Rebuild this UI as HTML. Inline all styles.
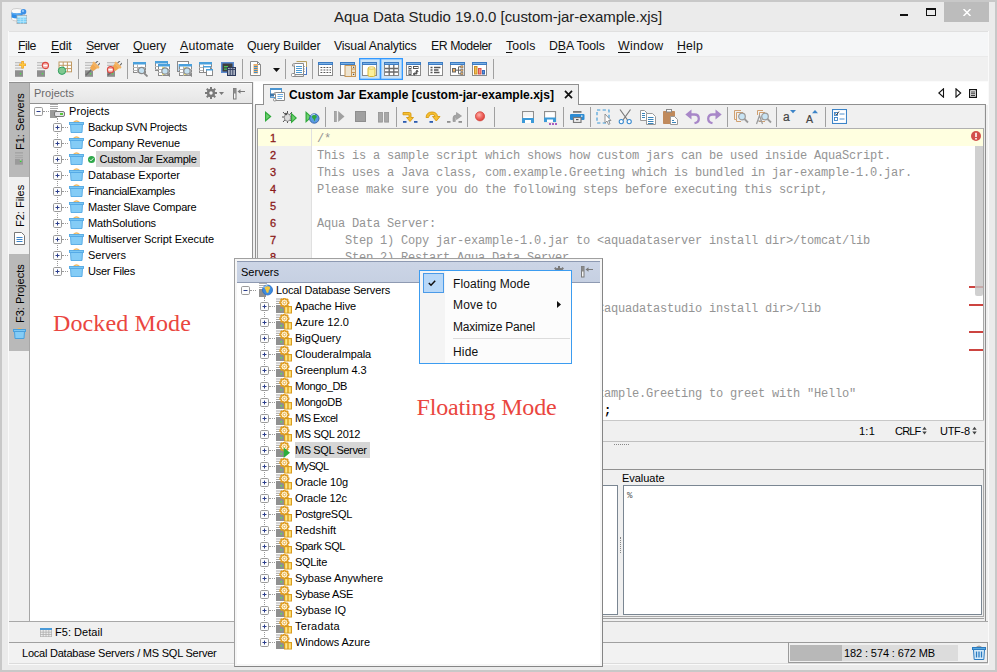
<!DOCTYPE html>
<html><head><meta charset="utf-8"><title>Aqua Data Studio 19.0.0 [custom-jar-example.xjs]</title>
<style>
*{box-sizing:border-box}
html,body{margin:0;padding:0}
body{width:997px;height:672px;overflow:hidden;background:#ebebeb;font-family:"Liberation Sans",sans-serif;font-size:11px;color:#000;position:relative}
.ab{position:absolute}
.t{position:absolute;white-space:nowrap;line-height:16px;height:16px;font-size:11px;letter-spacing:-0.2px}
.m{position:absolute;top:38px;white-space:nowrap;font-size:12.300px;line-height:16px;color:#111}
.m u{text-decoration:underline;text-underline-offset:2px}
.sep{position:absolute;width:1px;background:#a0a0a0}
.code{position:absolute;left:317px;white-space:pre;font-family:"Liberation Mono",monospace;font-size:12px;letter-spacing:-0.200px;line-height:17px;height:17px;color:#949494}
.ln{position:absolute;left:270px;white-space:pre;font-size:11px;line-height:17px;height:17px;color:#8b1a1a;-webkit-text-stroke:.3px #8b1a1a}
.vt{position:absolute;white-space:nowrap;font-size:11px;transform-origin:0 0;transform:rotate(-90deg);line-height:14px;height:14px}
.sel{background:#d6d6d6}
.dots{position:absolute;border-left:1px dotted #9a9a9a;width:0}
.hd{position:absolute;border-top:1px dotted #9a9a9a;height:0}
.cm{position:absolute;white-space:nowrap;font-size:12px;line-height:16px;color:#111}
</style></head><body>

<div class="ab" style="left:0;top:0;width:997px;height:672px;background:#ebebeb;border:2px solid #c8c8c8"></div>
<div class="ab" style="left:8px;top:31px;width:981px;height:634px;background:#fafafa"></div>
<div class="ab" style="left:334px;top:7px;font-size:15px;letter-spacing:-0.045px;line-height:20px;color:#222;white-space:nowrap">Aqua Data Studio 19.0.0 [custom-jar-example.xjs]</div>
<svg class="ab" style="left:11px;top:8px" width="16" height="16" viewBox="0 0 16 16"><path d="M.5 2.500Q.5 .5 6 .5Q11.500 .5 11.500 2.500V11Q11.500 13 6 13Q.5 13 .5 11Z" fill="#fafafa" stroke="#c4c4c4" stroke-width=".8"/><path d="M.6 4.500Q6 6.500 11.400 4.500V9.500Q6 11.500 .6 9.500Z" fill="#2e8ee8"/><path d="M.6 4.500Q6 6.500 11.400 4.500V6Q6 8 .6 6Z" fill="#58a8f0"/><circle cx="12.500" cy="3.800" r="2.800" fill="#3a8ee6"/><circle cx="12" cy="3" r="1.200" fill="#8cc4f8"/><rect x="6" y="7.500" width="9.800" height="8.200" fill="#7ad0f8" stroke="#a8a8a8" stroke-width=".8"/><rect x="6.400" y="7.900" width="9" height="1.800" fill="#c8ecfc"/><path d="M6 11.300H15.800M6 13.500H15.800M9.300 9.700V15.700M12.600 9.700V15.700" stroke="#b8e6fc" stroke-width=".7"/></svg>
<div class="ab" style="left:900px;top:14px;width:8px;height:2px;background:#111"></div>
<div class="ab" style="left:926px;top:8px;width:10px;height:8px;border:1px solid #111;border-top-width:2px"></div>
<div class="ab" style="left:944px;top:2px;width:45px;height:20px;background:#bcbcbc"></div>
<svg class="ab" style="left:963px;top:9px" width="8" height="7" viewBox="0 0 8 7"><path d="M.5 0L7.500 7M7.500 0L.5 7" stroke="#fff" stroke-width="1.500"/></svg>
<div class="ab" style="left:9px;top:31px;width:979px;height:26px;background:#f5f6f7;border-top:1px solid #e0e0e0;border-bottom:1px solid #eaeaea"></div>
<div class="m" style="left:18px;letter-spacing:-0.457px"><u>F</u>ile</div>
<div class="m" style="left:51px;letter-spacing:-0.176px"><u>E</u>dit</div>
<div class="m" style="left:86px;letter-spacing:-0.539px"><u>S</u>erver</div>
<div class="m" style="left:133px;letter-spacing:-0.1px"><u>Q</u>uery</div>
<div class="m" style="left:180px;letter-spacing:0.17px"><u>A</u>utomate</div>
<div class="m" style="left:247px;letter-spacing:-0.13px">Query Builder</div>
<div class="m" style="left:334px;letter-spacing:-0.17px">Visual Analytics</div>
<div class="m" style="left:431px;letter-spacing:-0.444px">ER Modeler</div>
<div class="m" style="left:506px;letter-spacing:0.156px"><u>T</u>ools</div>
<div class="m" style="left:549px;letter-spacing:-0.092px">D<u>B</u>A Tools</div>
<div class="m" style="left:618px;letter-spacing:0.275px"><u>W</u>indow</div>
<div class="m" style="left:677px;letter-spacing:0.172px"><u>H</u>elp</div>
<div class="ab" style="left:9px;top:57px;width:979px;height:607px;background:#f0f0f0"></div>
<div class="ab" style="left:8px;top:81px;width:981px;height:1px;background:#fbfbfb"></div>
<svg class="ab" style="left:14px;top:61px" width="16" height="16" viewBox="0 0 16 16"><rect x="1" y="1" width="8" height="1.300" fill="#c0c0c0"/><rect x="1" y="3.700" width="8" height="1.300" fill="#c0c0c0"/><rect x="1" y="6.400" width="8" height="1.300" fill="#c0c0c0"/><rect x="1" y="10" width="8" height="5.800" fill="#8e8e8e"/><rect x="1" y="9" width="8" height="1" fill="#a8a8a8"/><rect x="5.800" y="12" width="1.400" height="1.400" fill="#4ae04a"/><path d="M8.600 0V7.500M5.300 3.750H11.900" stroke="#f0a020" stroke-width="2.600"/><path d="M8.600 .7V6.800M6 3.750H11.200" stroke="#fcc840" stroke-width="1.300"/></svg>
<svg class="ab" style="left:36px;top:61px" width="16" height="16" viewBox="0 0 16 16"><rect x="1" y="1" width="8" height="1.300" fill="#c0c0c0"/><rect x="1" y="3.700" width="8" height="1.300" fill="#c0c0c0"/><rect x="1" y="6.400" width="8" height="1.300" fill="#c0c0c0"/><rect x="1" y="10" width="8" height="5.800" fill="#8e8e8e"/><rect x="1" y="9" width="8" height="1" fill="#a8a8a8"/><rect x="5.800" y="12" width="1.400" height="1.400" fill="#4ae04a"/><circle cx="9.4" cy="4.5" r="3.1" fill="#f4aaa6" stroke="#dc4840" stroke-width="1.100"/><rect x="7.4" y="3.75" width="4" height="1.500" fill="#fff"/></svg>
<svg class="ab" style="left:57px;top:61px" width="16" height="16" viewBox="0 0 16 16"><rect x="2" y="1" width="12.500" height="9.800" fill="#fff" stroke="#c09a64" stroke-width="1"/><path d="M2 4.300H14.500M2 7.600H14.500M6.200 1V10.800M10.400 1V10.800" stroke="#c09a64" stroke-width="1"/><circle cx="5" cy="9.700" r="3.700" fill="#80c890" stroke="#30a060" stroke-width="1"/></svg>
<div class="sep" style="left:78px;top:59px;height:20px"></div>
<svg class="ab" style="left:84px;top:61px" width="16" height="16" viewBox="0 0 16 16"><rect x="1" y="1" width="8" height="1.300" fill="#c0c0c0"/><rect x="1" y="3.700" width="8" height="1.300" fill="#c0c0c0"/><rect x="1" y="6.400" width="8" height="1.300" fill="#c0c0c0"/><rect x="1" y="10" width="8" height="5.800" fill="#8e8e8e"/><rect x="1" y="9" width="8" height="1" fill="#a8a8a8"/><rect x="5.800" y="12" width="1.400" height="1.400" fill="#4ae04a"/><g transform="translate(9.600,6.400) rotate(45)"><path d="M-1.600 -8.500V-4M1.600 -8.500V-4" stroke="#6a6a6a" stroke-width="1.100"/><path d="M0 3V11" stroke="#6a6a6a" stroke-width="1.500"/><rect x="-4.200" y="-4.500" width="8.400" height="2.400" rx=".6" fill="#f4b464"/><path d="M-3.200 -2.200H3.200L2.400 2.600Q0 4.200 -2.400 2.600Z" fill="#f0a850"/></g></svg>
<svg class="ab" style="left:106px;top:61px" width="16" height="16" viewBox="0 0 16 16"><rect x="1" y="1" width="8" height="1.300" fill="#c0c0c0"/><rect x="1" y="3.700" width="8" height="1.300" fill="#c0c0c0"/><rect x="1" y="6.400" width="8" height="1.300" fill="#c0c0c0"/><rect x="1" y="10" width="8" height="5.800" fill="#8e8e8e"/><rect x="1" y="9" width="8" height="1" fill="#a8a8a8"/><rect x="5.800" y="12" width="1.400" height="1.400" fill="#4ae04a"/><g transform="translate(9.600,6.400) rotate(45)"><path d="M-1.600 -8.500V-4M1.600 -8.500V-4" stroke="#6a6a6a" stroke-width="1.100"/><path d="M0 3V11" stroke="#6a6a6a" stroke-width="1.500"/><rect x="-4.200" y="-4.500" width="8.400" height="2.400" rx=".6" fill="#f4b464"/><path d="M-3.200 -2.200H3.200L2.400 2.600Q0 4.200 -2.400 2.600Z" fill="#f0a850"/></g><circle cx="4.5" cy="8.7" r="3.1" fill="#f4aaa6" stroke="#dc4840" stroke-width="1.100"/><rect x="2.5" y="7.949999999999999" width="4" height="1.500" fill="#fff"/></svg>
<div class="sep" style="left:127px;top:59px;height:20px"></div>
<svg class="ab" style="left:132px;top:61px" width="16" height="16" viewBox="0 0 16 16"><rect x="1.5" y="1.5" width="12" height="10" fill="#fff" stroke="#8a8a8a"/><rect x="1" y="1" width="13" height="2.500" fill="#4aa0dc"/><path d="M1 6.5H14M1 9.5H14M5.5 3.5V12" stroke="#b4b4b4" stroke-width="1"/><path d="M12.0 12.0L15.5 15.5" stroke="#8a8a8a" stroke-width="1.800"/><circle cx="9.5" cy="9.5" r="3.200" fill="#c4e0f0" stroke="#8a8a8a" stroke-width="1.200"/></svg>
<svg class="ab" style="left:154px;top:61px" width="16" height="16" viewBox="0 0 16 16"><rect x="1.5" y="0.5" width="12" height="9" fill="#fff" stroke="#8a8a8a"/><rect x="1" y="0" width="13" height="2.500" fill="#4aa0dc"/><path d="M1 5.5H14M1 8.5H14M5.5 2.5V10" stroke="#b4b4b4" stroke-width="1"/><rect x="4.5" y="3.5" width="11" height="11" fill="#fff" stroke="#8a8a8a"/><rect x="4" y="3" width="12" height="2.500" fill="#4aa0dc"/><path d="M4 8.5H16M4 11.5H16M8.5 5.5V15" stroke="#b4b4b4" stroke-width="1"/><rect x="8" y="6" width="3" height="2" fill="#f8e87a"/><rect x="8" y="12" width="3" height="2" fill="#f8e87a"/><path d="M13.5 12.5L17 16" stroke="#8a8a8a" stroke-width="1.800"/><circle cx="11" cy="10" r="3.200" fill="#c4e0f0" stroke="#8a8a8a" stroke-width="1.200"/></svg>
<svg class="ab" style="left:176px;top:61px" width="16" height="16" viewBox="0 0 16 16"><rect x="1.500" y=".5" width="11" height="10" fill="#fff" stroke="#8a8a8a"/><rect x="2" y="3" width="2" height="7" fill="#b8d8f0"/><rect x="3.5" y="3.5" width="12" height="11" fill="#fff" stroke="#8a8a8a"/><rect x="3" y="3" width="13" height="2.500" fill="#4aa0dc"/><path d="M3 8.5H16M3 11.5H16M7.5 5.5V15" stroke="#b4b4b4" stroke-width="1"/><rect x="8" y="6" width="3" height="2" fill="#f8e87a"/><rect x="8" y="12" width="3" height="2" fill="#f8e87a"/><path d="M13.5 12.5L17 16" stroke="#8a8a8a" stroke-width="1.800"/><circle cx="11" cy="10" r="3.200" fill="#c4e0f0" stroke="#8a8a8a" stroke-width="1.200"/></svg>
<svg class="ab" style="left:199px;top:61px" width="16" height="16" viewBox="0 0 16 16"><rect x="0.5" y="1.5" width="12" height="10" fill="#fff" stroke="#8a8a8a"/><rect x="0" y="1" width="13" height="2.500" fill="#4aa0dc"/><path d="M0 6.5H13M0 9.5H13M4.5 3.5V12" stroke="#b4b4b4" stroke-width="1"/><rect x="4.500" y="5.500" width="7" height="6" fill="#fff" stroke="#8a8a8a"/><rect x="4" y="5" width="8" height="1.500" fill="#4aa0dc"/><rect x="7.500" y="8.500" width="6" height="6" fill="#fff" stroke="#8a8a8a"/><rect x="7" y="8" width="7" height="1.500" fill="#4aa0dc"/></svg>
<svg class="ab" style="left:221px;top:61px" width="16" height="16" viewBox="0 0 16 16"><rect x=".75" y="1.750" width="11.500" height="9.500" fill="#3e3e3e" stroke="#5a8ad0" stroke-width="1.500"/><rect x="3" y="5" width="4" height="1.300" fill="#4ac05a"/><rect x="3" y="7.500" width="4" height="1.300" fill="#4ac05a"/><rect x="6.500" y="6.500" width="8" height="8" fill="#a8b0c0" stroke="#2c3a5c"/><path d="M9.200 6.500V14.500M11.800 6.500V14.500M6.500 8.500H14.500" stroke="#2c3a5c" stroke-width=".9"/></svg>
<div class="sep" style="left:242px;top:59px;height:20px"></div>
<svg class="ab" style="left:250px;top:61px" width="12" height="16" viewBox="0 0 12 16"><path d="M.5 .5H7.500L10.500 3.500V14.500H.5Z" fill="#fff" stroke="#8a8a8a"/><path d="M7.500 .5V3.500H10.500" fill="none" stroke="#8a8a8a"/><rect x="3.500" y="3" width="4.500" height="9.500" fill="#e8b070"/><path d="M4 5.500H7.500M4 7.500H7.500M4 9.500H7.500M4 11.500H7.500" stroke="#3c8cc8" stroke-width="1"/></svg>
<svg class="ab" style="left:273px;top:68px" width="7" height="4" viewBox="0 0 7 4"><path d="M0 0H7L3.500 4Z" fill="#111"/></svg>
<div class="sep" style="left:285px;top:59px;height:20px"></div>
<svg class="ab" style="left:291px;top:60px" width="17" height="18" viewBox="0 0 17 18"><path d="M5.500 1.500H15.500V10" fill="none" stroke="#b8a060" stroke-width="1"/><rect x="12.500" y="7" width="3.500" height="8" fill="#4a7ac8"/><rect x="11.500" y="3" width="3.500" height="11" fill="#fff"/><path d="M13 6v1M13 8.500v1M13 11v1" stroke="#666"/><path d="M3.500 3.500H12.500V14.500H3.500Z" fill="#fff" stroke="#8a8a8a"/><path d="M3.500 3.500Q1 3.500 1.500 6H3.500" fill="#fff" stroke="#8a8a8a"/><path d="M5 6.500H11M5 8.500H11M5 10.500H11M5 12.500H11" stroke="#4a9ad4" stroke-width="1"/><rect x=".5" y="13.500" width="3.500" height="3" rx="1" fill="#fff" stroke="#8a8a8a"/><path d="M3 16.500H12.500V14.500" fill="none" stroke="#8a8a8a"/></svg>
<div class="sep" style="left:312px;top:59px;height:20px"></div>
<svg class="ab" style="left:318px;top:61px" width="16" height="16" viewBox="0 0 16 16"><rect x=".5" y="1.500" width="14" height="13" fill="#fff" stroke="#8a8a8a"/><rect x="0" y="1" width="15" height="3" fill="#3c7cc4"/><rect x="1" y="2" width="13" height="1" fill="#7ab0e4"/><path d="M2.500 6.500H4.300M5.500 6.500H7.300M8.500 6.500H10.300M11.500 6.500H13M2.500 9H4.300M5.500 9H7.300M8.500 9H10.300M11.500 9H13M2.500 11.500H4.300M5.500 11.500H7.300M8.500 11.500H10.300M11.500 11.500H13" stroke="#555" stroke-width="1.200"/></svg>
<svg class="ab" style="left:340px;top:61px" width="16" height="16" viewBox="0 0 16 16"><rect x=".5" y="1.500" width="14" height="13" fill="#fff" stroke="#8a8a8a"/><rect x="0" y="1" width="15" height="3" fill="#3c7cc4"/><rect x="1" y="2" width="13" height="1" fill="#7ab0e4"/><rect x="5" y="4.500" width="10.500" height="11" fill="#eee4d0" stroke="#c89858"/><path d="M11.500 4.500V15.500M11.500 8H15.500M11.500 11.500H15.500" stroke="#c89858"/><rect x="13" y="5.700" width="1.200" height="1.200" fill="#555"/><rect x="13" y="12.800" width="1.200" height="1.200" fill="#555"/></svg>
<div class="ab" style="left:359px;top:58px;width:22px;height:22px;background:#cce4f7;border:1px solid #3399ff;box-shadow:inset 0 0 0 .5px #66b2ff"></div>
<div class="ab" style="left:380px;top:58px;width:23px;height:22px;background:#cce4f7;border:1px solid #3399ff;box-shadow:inset 0 0 0 .5px #66b2ff"></div>
<svg class="ab" style="left:362px;top:61px" width="16" height="16" viewBox="0 0 16 16"><rect x=".5" y="1.500" width="14" height="13" fill="#fff" stroke="#8a8a8a"/><rect x="0" y="1" width="15" height="3" fill="#3c7cc4"/><rect x="1" y="2" width="13" height="1" fill="#7ab0e4"/><rect x="6" y="6.500" width="7" height="9" rx="1.500" fill="#fdf09a" stroke="#d8b83a"/><ellipse cx="9.500" cy="7" rx="3.500" ry="1.200" fill="#fff8c8" stroke="#d8b83a" stroke-width=".8"/></svg>
<svg class="ab" style="left:384px;top:61px" width="16" height="16" viewBox="0 0 16 16"><rect x=".5" y="1.500" width="14" height="13" fill="#fff" stroke="#8a8a8a"/><rect x="0" y="1" width="15" height="3" fill="#3c7cc4"/><rect x="1" y="2" width="13" height="1" fill="#7ab0e4"/><path d="M1 7.500H14M1 11H14M5.200 4V14.500M9.800 4V14.500" stroke="#6a6a6a" stroke-width="1.300"/></svg>
<svg class="ab" style="left:406px;top:61px" width="16" height="16" viewBox="0 0 16 16"><rect x=".5" y="1.500" width="14" height="13" fill="#fff" stroke="#8a8a8a"/><rect x="0" y="1" width="15" height="3" fill="#3c7cc4"/><rect x="1" y="2" width="13" height="1" fill="#7ab0e4"/><rect x="3" y="5.500" width="2" height="2" fill="none" stroke="#555"/><rect x="7.500" y="5.500" width="4.500" height="2" fill="none" stroke="#555"/><rect x="3" y="9" width="2" height="4.500" fill="none" stroke="#555"/><path d="M8 13H11V10M7 13l1.500-1.200v2.400ZM11 9l-1.200 1.500h2.400Z" stroke="#555" fill="#555" stroke-width=".8"/></svg>
<svg class="ab" style="left:428px;top:61px" width="16" height="16" viewBox="0 0 16 16"><rect x=".5" y="1.500" width="14" height="13" fill="#fff" stroke="#8a8a8a"/><rect x="0" y="1" width="15" height="3" fill="#3c7cc4"/><rect x="1" y="2" width="13" height="1" fill="#7ab0e4"/><path d="M2.500 6.500H4.500M6 6.500H12.500M2.500 9H4.500M6 9H10.500M2.500 11.500H4.500M6 11.500H11.500" stroke="#555" stroke-width="1.300"/></svg>
<svg class="ab" style="left:450px;top:61px" width="16" height="16" viewBox="0 0 16 16"><rect x=".5" y="1.500" width="14" height="13" fill="#fff" stroke="#8a8a8a"/><rect x="0" y="1" width="15" height="3" fill="#3c7cc4"/><rect x="1" y="2" width="13" height="1" fill="#7ab0e4"/><rect x="2.500" y="7.500" width="3" height="3.500" fill="#f0b060" stroke="#666"/><path d="M5.500 9.200H8.500M8.500 5.800V12.800M8.500 5.800H11M8.500 9.200H11M8.500 12.800H11" stroke="#666" fill="none"/><rect x="10.800" y="4.800" width="2.200" height="2.200" fill="#f0b060" stroke="#666" stroke-width=".6"/><rect x="10.800" y="8.200" width="2.200" height="2.200" fill="#f0b060" stroke="#666" stroke-width=".6"/><rect x="10.800" y="11.600" width="2.200" height="2.200" fill="#f0b060" stroke="#666" stroke-width=".6"/></svg>
<svg class="ab" style="left:472px;top:61px" width="16" height="16" viewBox="0 0 16 16"><rect x=".5" y="1.500" width="14" height="13" fill="#fff" stroke="#8a8a8a"/><rect x="0" y="1" width="15" height="3" fill="#3c7cc4"/><rect x="1" y="2" width="13" height="1" fill="#7ab0e4"/><rect x="2.500" y="5.500" width="2.500" height="7.500" fill="#f4c050" stroke="#c8902a"/><rect x="6.500" y="7.500" width="2.500" height="5.500" fill="#f48a8a" stroke="#d8504a"/><rect x="10.500" y="9.500" width="2" height="3.500" fill="#5a9ae0" stroke="#3a6ab8"/></svg>
<div class="sep" style="left:493px;top:59px;height:20px"></div>
<div class="ab" style="left:9px;top:83px;width:21px;height:94px;background:#b9b9b9"></div>
<div class="ab" style="left:9px;top:254px;width:21px;height:97px;background:#b9b9b9"></div>
<div class="ab" style="left:29px;top:83px;width:1px;height:539px;background:#a6a6a6"></div>
<div class="vt" style="left:13px;top:150px">F1: Servers</div>
<div class="vt" style="left:13px;top:227px">F2: Files</div>
<div class="vt" style="left:13px;top:323px">F3: Projects</div>
<svg class="ab" style="left:15px;top:152px" width="8" height="13" viewBox="0 0 8 13"><rect x="0" y="0" width="8" height="1.600" fill="#a6a6a6"/><rect x="0" y="3.200" width="8" height="1" fill="#a6a6a6"/><rect x="0" y="5.200" width="8" height="1" fill="#a6a6a6"/><rect x="0" y="7" width="8" height="5.700" fill="#9a9a9a"/><rect x="4.900" y="8.200" width="1.500" height="1.800" fill="#2ed02e"/><rect x="4.900" y="7.600" width="1.500" height=".8" fill="#e8e8e8"/></svg>
<svg class="ab" style="left:14px;top:232px" width="11" height="13" viewBox="0 0 11 13"><path d="M.5 .5H7.500L10.500 3.500V12.500H.5Z" fill="#fff" stroke="#777"/><path d="M2.500 5.500H8.500M2.500 7.500H8.500M2.500 9.500H8.500" stroke="#3c84c8"/></svg>
<svg class="ab" style="left:13px;top:328px" width="13" height="11" viewBox="0 0 13 11"><path d="M4 2Q6.500 -0.500 9 2" fill="none" stroke="#f0b860" stroke-width="1.200"/><rect x=".5" y="1.500" width="12" height="2" fill="#7cc8f4" stroke="#4aa0dc"/><path d="M1.500 3.500H11.500L11 10.500H2Z" fill="#84ccf6" stroke="#4aa0dc"/></svg>
<div class="ab" style="left:9px;top:82px;width:244px;height:1px;background:#909090"></div>
<div class="ab" style="left:30px;top:83px;width:223px;height:539px;background:#fff;border-right:1px solid #909090;border-bottom:1px solid #909090"></div>
<div class="ab" style="left:30px;top:83px;width:222px;height:21px;background:linear-gradient(#f2f2f2,#e6e6e6);border-top:1px solid #fafafa;border-bottom:1px solid #909090"></div>
<div class="t" style="left:34px;top:85px;letter-spacing:0.031px;color:#6a6a6a">Projects</div>
<svg class="ab" style="left:205px;top:87px" width="12" height="12" viewBox="0 0 12 12"><g fill="#7a7a7a"><circle cx="6" cy="6" r="4.200"/><rect x="5" y="0" width="2" height="12"/><rect x="0" y="5" width="12" height="2"/><rect x="5" y="0" width="2" height="12" transform="rotate(45 6 6)"/><rect x="5" y="0" width="2" height="12" transform="rotate(-45 6 6)"/></g><circle cx="6" cy="6" r="1.700" fill="#f4f4f4"/></svg><svg class="ab" style="left:219px;top:92px" width="5" height="3" viewBox="0 0 5 3"><path d="M0 0H5L2.500 3Z" fill="#7a7a7a"/></svg><svg class="ab" style="left:233px;top:88px" width="13" height="12" viewBox="0 0 13 12"><rect x=".5" y=".5" width="2.500" height="10.500" fill="#f4f4f4" stroke="#7a7a7a"/><rect x=".5" y=".5" width="2.500" height="5" fill="#8a8a8a"/><path d="M5 3.500H12" stroke="#7a7a7a" stroke-width="1"/><path d="M4.500 3.500L7.500 1.200V5.800Z" fill="#7a7a7a"/></svg>
<div class="dots" style="left:57px;top:118px;height:154px"></div>
<div class="hd" style="left:43px;top:111px;width:6px"></div>
<svg class="ab" style="left:34px;top:107px" width="9" height="9" viewBox="0 0 9 9"><rect x=".5" y=".5" width="8" height="8" rx="1.200" fill="#fdfdfd" stroke="#9a9a9a"/><path d="M2.500 4.500H6.500" stroke="#2c3e8c" stroke-width="1"/></svg>
<svg class="ab" style="left:49px;top:103px" width="16" height="16" viewBox="0 0 16 16"><rect x="1" y="1" width="8" height="1" fill="#aaa"/><rect x="1" y="3" width="8" height="1" fill="#aaa"/><rect x="1" y="5" width="8" height="1" fill="#aaa"/><rect x="1" y="7" width="7" height="8" fill="#9a9a9a"/><rect x="5.500" y="8.500" width="10" height="5" rx="1.500" fill="#e4e4e8" stroke="#777"/><rect x="11" y="10" width="3" height="2" fill="#5ac83c"/></svg>
<div class="t" style="left:69px;top:103px;letter-spacing:0.094px">Projects</div>
<svg class="ab" style="left:53px;top:123px" width="9" height="9" viewBox="0 0 9 9"><rect x=".5" y=".5" width="8" height="8" rx="1.200" fill="#fdfdfd" stroke="#9a9a9a"/><path d="M2.500 4.500H6.500" stroke="#2c3e8c" stroke-width="1"/><path d="M4.500 2.500V6.500" stroke="#2c3e8c" stroke-width="1"/></svg>
<div class="hd" style="left:62px;top:127px;width:6px"></div>
<svg class="ab" style="left:69px;top:120px" width="15" height="13" viewBox="0 0 15 13"><path d="M4.500 2.400Q7.500 -0.400 10.500 2.400" fill="none" stroke="#f0b860" stroke-width="1.300"/><rect x=".5" y="2.500" width="14" height="2" fill="#7cc8f4" stroke="#52a8e4" stroke-width=".9"/><path d="M1.500 4.500H13.500L13 12.500H2Z" fill="#84ccf6" stroke="#52a8e4" stroke-width=".9"/></svg>
<div class="t" style="left:88px;top:119px;letter-spacing:-0.324px">Backup SVN Projects</div>
<svg class="ab" style="left:53px;top:139px" width="9" height="9" viewBox="0 0 9 9"><rect x=".5" y=".5" width="8" height="8" rx="1.200" fill="#fdfdfd" stroke="#9a9a9a"/><path d="M2.500 4.500H6.500" stroke="#2c3e8c" stroke-width="1"/><path d="M4.500 2.500V6.500" stroke="#2c3e8c" stroke-width="1"/></svg>
<div class="hd" style="left:62px;top:143px;width:6px"></div>
<svg class="ab" style="left:69px;top:136px" width="15" height="13" viewBox="0 0 15 13"><path d="M4.500 2.400Q7.500 -0.400 10.500 2.400" fill="none" stroke="#f0b860" stroke-width="1.300"/><rect x=".5" y="2.500" width="14" height="2" fill="#7cc8f4" stroke="#52a8e4" stroke-width=".9"/><path d="M1.500 4.500H13.500L13 12.500H2Z" fill="#84ccf6" stroke="#52a8e4" stroke-width=".9"/></svg>
<div class="t" style="left:88px;top:135px;letter-spacing:-0.145px">Company Revenue</div>
<svg class="ab" style="left:53px;top:155px" width="9" height="9" viewBox="0 0 9 9"><rect x=".5" y=".5" width="8" height="8" rx="1.200" fill="#fdfdfd" stroke="#9a9a9a"/><path d="M2.500 4.500H6.500" stroke="#2c3e8c" stroke-width="1"/><path d="M4.500 2.500V6.500" stroke="#2c3e8c" stroke-width="1"/></svg>
<div class="hd" style="left:62px;top:159px;width:6px"></div>
<svg class="ab" style="left:69px;top:152px" width="15" height="13" viewBox="0 0 15 13"><path d="M4.500 2.400Q7.500 -0.400 10.500 2.400" fill="none" stroke="#f0b860" stroke-width="1.300"/><rect x=".5" y="2.500" width="14" height="2" fill="#7cc8f4" stroke="#52a8e4" stroke-width=".9"/><path d="M1.500 4.500H13.500L13 12.500H2Z" fill="#84ccf6" stroke="#52a8e4" stroke-width=".9"/></svg>
<svg class="ab" style="left:88px;top:156px" width="7" height="7" viewBox="0 0 7 7"><circle cx="3.500" cy="3.500" r="3.500" fill="#2ea84a"/><path d="M1.800 3.600L3 4.800L5.300 2.300" stroke="#fff" stroke-width="1" fill="none"/></svg>
<div class="t sel" style="left:96px;top:151px;padding:0 3.500px;width:104px;letter-spacing:-0.283px">Custom Jar Example</div>
<svg class="ab" style="left:53px;top:171px" width="9" height="9" viewBox="0 0 9 9"><rect x=".5" y=".5" width="8" height="8" rx="1.200" fill="#fdfdfd" stroke="#9a9a9a"/><path d="M2.500 4.500H6.500" stroke="#2c3e8c" stroke-width="1"/><path d="M4.500 2.500V6.500" stroke="#2c3e8c" stroke-width="1"/></svg>
<div class="hd" style="left:62px;top:175px;width:6px"></div>
<svg class="ab" style="left:69px;top:168px" width="15" height="13" viewBox="0 0 15 13"><path d="M4.500 2.400Q7.500 -0.400 10.500 2.400" fill="none" stroke="#f0b860" stroke-width="1.300"/><rect x=".5" y="2.500" width="14" height="2" fill="#7cc8f4" stroke="#52a8e4" stroke-width=".9"/><path d="M1.500 4.500H13.500L13 12.500H2Z" fill="#84ccf6" stroke="#52a8e4" stroke-width=".9"/></svg>
<div class="t" style="left:88px;top:167px;letter-spacing:0.017px">Database Exporter</div>
<svg class="ab" style="left:53px;top:187px" width="9" height="9" viewBox="0 0 9 9"><rect x=".5" y=".5" width="8" height="8" rx="1.200" fill="#fdfdfd" stroke="#9a9a9a"/><path d="M2.500 4.500H6.500" stroke="#2c3e8c" stroke-width="1"/><path d="M4.500 2.500V6.500" stroke="#2c3e8c" stroke-width="1"/></svg>
<div class="hd" style="left:62px;top:191px;width:6px"></div>
<svg class="ab" style="left:69px;top:184px" width="15" height="13" viewBox="0 0 15 13"><path d="M4.500 2.400Q7.500 -0.400 10.500 2.400" fill="none" stroke="#f0b860" stroke-width="1.300"/><rect x=".5" y="2.500" width="14" height="2" fill="#7cc8f4" stroke="#52a8e4" stroke-width=".9"/><path d="M1.500 4.500H13.500L13 12.500H2Z" fill="#84ccf6" stroke="#52a8e4" stroke-width=".9"/></svg>
<div class="t" style="left:88px;top:183px;letter-spacing:-0.313px">FinancialExamples</div>
<svg class="ab" style="left:53px;top:203px" width="9" height="9" viewBox="0 0 9 9"><rect x=".5" y=".5" width="8" height="8" rx="1.200" fill="#fdfdfd" stroke="#9a9a9a"/><path d="M2.500 4.500H6.500" stroke="#2c3e8c" stroke-width="1"/><path d="M4.500 2.500V6.500" stroke="#2c3e8c" stroke-width="1"/></svg>
<div class="hd" style="left:62px;top:207px;width:6px"></div>
<svg class="ab" style="left:69px;top:200px" width="15" height="13" viewBox="0 0 15 13"><path d="M4.500 2.400Q7.500 -0.400 10.500 2.400" fill="none" stroke="#f0b860" stroke-width="1.300"/><rect x=".5" y="2.500" width="14" height="2" fill="#7cc8f4" stroke="#52a8e4" stroke-width=".9"/><path d="M1.500 4.500H13.500L13 12.500H2Z" fill="#84ccf6" stroke="#52a8e4" stroke-width=".9"/></svg>
<div class="t" style="left:88px;top:199px;letter-spacing:-0.2px">Master Slave Compare</div>
<svg class="ab" style="left:53px;top:219px" width="9" height="9" viewBox="0 0 9 9"><rect x=".5" y=".5" width="8" height="8" rx="1.200" fill="#fdfdfd" stroke="#9a9a9a"/><path d="M2.500 4.500H6.500" stroke="#2c3e8c" stroke-width="1"/><path d="M4.500 2.500V6.500" stroke="#2c3e8c" stroke-width="1"/></svg>
<div class="hd" style="left:62px;top:223px;width:6px"></div>
<svg class="ab" style="left:69px;top:216px" width="15" height="13" viewBox="0 0 15 13"><path d="M4.500 2.400Q7.500 -0.400 10.500 2.400" fill="none" stroke="#f0b860" stroke-width="1.300"/><rect x=".5" y="2.500" width="14" height="2" fill="#7cc8f4" stroke="#52a8e4" stroke-width=".9"/><path d="M1.500 4.500H13.500L13 12.500H2Z" fill="#84ccf6" stroke="#52a8e4" stroke-width=".9"/></svg>
<div class="t" style="left:88px;top:215px;letter-spacing:-0.132px">MathSolutions</div>
<svg class="ab" style="left:53px;top:235px" width="9" height="9" viewBox="0 0 9 9"><rect x=".5" y=".5" width="8" height="8" rx="1.200" fill="#fdfdfd" stroke="#9a9a9a"/><path d="M2.500 4.500H6.500" stroke="#2c3e8c" stroke-width="1"/><path d="M4.500 2.500V6.500" stroke="#2c3e8c" stroke-width="1"/></svg>
<div class="hd" style="left:62px;top:239px;width:6px"></div>
<svg class="ab" style="left:69px;top:232px" width="15" height="13" viewBox="0 0 15 13"><path d="M4.500 2.400Q7.500 -0.400 10.500 2.400" fill="none" stroke="#f0b860" stroke-width="1.300"/><rect x=".5" y="2.500" width="14" height="2" fill="#7cc8f4" stroke="#52a8e4" stroke-width=".9"/><path d="M1.500 4.500H13.500L13 12.500H2Z" fill="#84ccf6" stroke="#52a8e4" stroke-width=".9"/></svg>
<div class="t" style="left:88px;top:231px;letter-spacing:-0.068px">Multiserver Script Execute</div>
<svg class="ab" style="left:53px;top:251px" width="9" height="9" viewBox="0 0 9 9"><rect x=".5" y=".5" width="8" height="8" rx="1.200" fill="#fdfdfd" stroke="#9a9a9a"/><path d="M2.500 4.500H6.500" stroke="#2c3e8c" stroke-width="1"/><path d="M4.500 2.500V6.500" stroke="#2c3e8c" stroke-width="1"/></svg>
<div class="hd" style="left:62px;top:255px;width:6px"></div>
<svg class="ab" style="left:69px;top:248px" width="15" height="13" viewBox="0 0 15 13"><path d="M4.500 2.400Q7.500 -0.400 10.500 2.400" fill="none" stroke="#f0b860" stroke-width="1.300"/><rect x=".5" y="2.500" width="14" height="2" fill="#7cc8f4" stroke="#52a8e4" stroke-width=".9"/><path d="M1.500 4.500H13.500L13 12.500H2Z" fill="#84ccf6" stroke="#52a8e4" stroke-width=".9"/></svg>
<div class="t" style="left:88px;top:247px;letter-spacing:0.013px">Servers</div>
<svg class="ab" style="left:53px;top:267px" width="9" height="9" viewBox="0 0 9 9"><rect x=".5" y=".5" width="8" height="8" rx="1.200" fill="#fdfdfd" stroke="#9a9a9a"/><path d="M2.500 4.500H6.500" stroke="#2c3e8c" stroke-width="1"/><path d="M4.500 2.500V6.500" stroke="#2c3e8c" stroke-width="1"/></svg>
<div class="hd" style="left:62px;top:271px;width:6px"></div>
<svg class="ab" style="left:69px;top:264px" width="15" height="13" viewBox="0 0 15 13"><path d="M4.500 2.400Q7.500 -0.400 10.500 2.400" fill="none" stroke="#f0b860" stroke-width="1.300"/><rect x=".5" y="2.500" width="14" height="2" fill="#7cc8f4" stroke="#52a8e4" stroke-width=".9"/><path d="M1.500 4.500H13.500L13 12.500H2Z" fill="#84ccf6" stroke="#52a8e4" stroke-width=".9"/></svg>
<div class="t" style="left:88px;top:263px;letter-spacing:-0.252px">User Files</div>
<div class="ab" style="left:53px;top:309px;font-family:'Liberation Serif',serif;font-size:24px;letter-spacing:.12px;line-height:28px;color:#ea4640;white-space:nowrap">Docked Mode</div>
<div class="ab" style="left:254px;top:82px;width:734px;height:23px;background:#fff"></div>
<div class="ab" style="left:255px;top:104px;width:731px;height:518px;background:#f0f0f0;border:1px solid #909090"></div>
<div class="ab" style="left:263px;top:84px;width:316px;height:21px;background:#f0f0f0;border:1px solid #909090;border-bottom:none"></div>
<div class="ab" style="left:289px;top:86.500px;font-weight:bold;font-size:12px;line-height:16px;white-space:nowrap;letter-spacing:0.036px">Custom Jar Example [custom-jar-example.xjs]</div>
<svg class="ab" style="left:564px;top:90px" width="9" height="9" viewBox="0 0 9 9"><path d="M1 .8L8 8.200M8 .8L1 8.200" stroke="#111" stroke-width="1.700"/></svg>
<svg class="ab" style="left:270px;top:88px" width="15" height="14" viewBox="0 0 15 14"><rect x=".5" y=".5" width="11" height="9" fill="#fff" stroke="#5a9ad0"/><rect x="0" y="0" width="12" height="2" fill="#4a94d0"/><rect x="1" y="3" width="3" height="2" fill="#fff"/><rect x="0" y="5.500" width="4" height="3" fill="#3c74a8"/><path d="M5.500 4.500H14.500V12.500H5.500Z" fill="#fff" stroke="#8a8a8a"/><path d="M5.500 4.500Q3.500 4.500 4 6.500H5.500" fill="#fff" stroke="#8a8a8a"/><path d="M7.500 6.500H13M7.500 8.500H13M7.500 10.500H12" stroke="#4a98d8" stroke-width=".8"/><rect x="3.500" y="10.500" width="2.500" height="2.500" rx="1" fill="#fff" stroke="#8a8a8a"/></svg>
<svg class="ab" style="left:938px;top:88px" width="7" height="10" viewBox="0 0 7 10"><path d="M5.500 .8V9.200L.8 5Z" fill="#fff" stroke="#111" stroke-width="1.100"/></svg>
<svg class="ab" style="left:955px;top:88px" width="7" height="10" viewBox="0 0 7 10"><path d="M1 .8V9.200L5.700 5Z" fill="#fff" stroke="#111" stroke-width="1.100"/></svg>
<svg class="ab" style="left:969px;top:89px" width="8" height="9" viewBox="0 0 8 9"><rect x=".6" y=".6" width="6.800" height="7.800" fill="#fff" stroke="#111" stroke-width="1.200"/><path d="M2 3H6M2 4.800H6M2 6.600H6" stroke="#111" stroke-width=".9"/></svg>
<svg class="ab" style="left:265px;top:111px" width="7" height="11" viewBox="0 0 7 11"><path d="M0 0L6.500 5.500L0 11Z" fill="#2fa83a"/><path d="M1.200 2.600L4.600 5.500L1.200 8.400Z" fill="#6ed070"/></svg>
<svg class="ab" style="left:282px;top:110px" width="16" height="15" viewBox="0 0 16 15"><path d="M1 2L10 12M10 2L1 12M0 7H11M5.500 1V13" stroke="#555" stroke-width="1"/><ellipse cx="5.500" cy="7.500" rx="3.200" ry="3.800" fill="#dcdcdc" stroke="#777" stroke-width=".8"/><circle cx="4" cy="4" r="1.200" fill="#555"/><path d="M9 2.500L15 8L9 13.500Z" fill="#2fa83a"/><path d="M10.200 5L13.400 8L10.200 11Z" fill="#6ed070"/></svg>
<svg class="ab" style="left:305px;top:111px" width="15" height="13" viewBox="0 0 15 13"><path d="M.5 0L7 6L.5 12Z" fill="#2fa83a"/><path d="M1.700 2.600L5.300 6L1.700 9.400Z" fill="#6ed070"/><circle cx="9.300" cy="7.500" r="4.700" fill="#5a9ae0" stroke="#2c5ca8" stroke-width=".9"/><path d="M7 5Q9 3.500 11.500 4.500Q12.500 6.500 10.500 7.500L9.500 10.500L8.500 8Q6.500 7 7 5Z" fill="#2fa83a"/><path d="M6 4.500Q8 3 10 3.500" stroke="#c8e0f8" stroke-width=".8" fill="none"/></svg>
<div class="sep" style="left:325px;top:107px;height:20px"></div>
<svg class="ab" style="left:334px;top:111px" width="11" height="11" viewBox="0 0 11 11"><rect x="0" y="0" width="2.300" height="11" fill="#a8a8a8" stroke="#949494" stroke-width=".6"/><path d="M4.200 0L10.500 5.500L4.200 11Z" fill="#a0a0a0"/></svg>
<svg class="ab" style="left:355px;top:111px" width="11" height="11" viewBox="0 0 11 11"><rect x=".5" y=".5" width="10" height="10" fill="#a0a0a0" stroke="#8e8e8e"/></svg>
<svg class="ab" style="left:378px;top:112px" width="11" height="11" viewBox="0 0 11 11"><rect x=".4" y=".4" width="4" height="9.700" fill="#a8a8a8" stroke="#949494" stroke-width=".8"/><rect x="6.600" y=".4" width="4" height="9.700" fill="#a8a8a8" stroke="#949494" stroke-width=".8"/></svg>
<div class="sep" style="left:396px;top:107px;height:20px"></div>
<svg class="ab" style="left:402px;top:111px" width="16" height="12" viewBox="0 0 16 12"><path d="M1 1.500H7.500Q9 1.500 9 3.200V6.500H11.500L8 10.500L4.500 6.500H7V3.800H1Z" fill="#f6c030" stroke="#d89a10" stroke-width=".9" stroke-linejoin="round"/><rect x="1" y="10" width="3.500" height="1.800" fill="#2c5cb0"/><rect x="12" y="10" width="3.500" height="1.800" fill="#2c5cb0"/></svg>
<svg class="ab" style="left:425px;top:111px" width="16" height="12" viewBox="0 0 16 12"><path d="M1 6.500Q1.500 1 7 1Q12 1 12.500 5.500H15L11.300 10L7.500 5.500H10Q9.500 3.200 7 3.200Q4 3.200 3.500 6.500Z" fill="#f6c030" stroke="#d89a10" stroke-width=".9" stroke-linejoin="round"/><rect x="4.500" y="10" width="3.500" height="1.800" fill="#2c5cb0"/></svg>
<svg class="ab" style="left:447px;top:111px" width="16" height="12" viewBox="0 0 16 12"><path d="M6 10.500V7Q6 4 9.500 4V1.500L14.500 5L9.500 8.500V6.300Q8.300 6.300 8.300 7.500V10.500Z" fill="#a4a4a4" stroke="#8e8e8e" stroke-width=".6"/><rect x="0" y="10" width="3.500" height="1.800" fill="#909090"/><rect x="11.500" y="10" width="3.500" height="1.800" fill="#909090"/></svg>
<div class="sep" style="left:467px;top:107px;height:20px"></div>
<svg class="ab" style="left:475px;top:111px" width="10" height="11" viewBox="0 0 10 11"><defs><radialGradient id="rg" cx=".4" cy=".35" r=".7"><stop offset="0" stop-color="#ffb0a8"/><stop offset=".5" stop-color="#f06a64"/><stop offset="1" stop-color="#d83a34"/></radialGradient></defs><circle cx="5" cy="5.300" r="4.600" fill="url(#rg)" stroke="#d04038" stroke-width=".7"/></svg>
<div class="sep" style="left:494px;top:107px;height:20px"></div>
<svg class="ab" style="left:522px;top:111px" width="12" height="12" viewBox="0 0 12 12"><rect x=".5" y=".5" width="11" height="11" fill="#fff" stroke="#8e8e8e" stroke-width="1.200"/><rect x="0" y="7" width="12" height="5" fill="#3c9ad8"/><rect x="3" y="9" width="6" height="3" fill="#fff"/><rect x="2" y="1.500" width="8" height="4" fill="#f4f4f4"/></svg>
<svg class="ab" style="left:544px;top:111px" width="14" height="14" viewBox="0 0 14 14"><rect x=".5" y=".5" width="11" height="10" fill="#fff" stroke="#8e8e8e" stroke-width="1.200"/><rect x="0" y="6.500" width="12" height="4.500" fill="#3c9ad8"/><rect x="3" y="8.500" width="6" height="2.500" fill="#fff"/><rect x="5" y="12" width="2" height="2" fill="#a860c0"/><rect x="8" y="12" width="2" height="2" fill="#a860c0"/><rect x="11" y="12" width="2" height="2" fill="#a860c0"/></svg>
<div class="sep" style="left:563px;top:107px;height:20px"></div>
<svg class="ab" style="left:570px;top:111px" width="15" height="12" viewBox="0 0 15 12"><rect x="3" y="0" width="8.500" height="1.800" fill="#7a7a7a"/><rect x="0" y="3" width="14.500" height="6" rx="1" fill="#2c8cd4"/><rect x="11" y="4.500" width="1.500" height="1.200" fill="#fff"/><rect x="3.500" y="6.500" width="7.500" height="5" fill="#f0f0f0" stroke="#7a7a7a" stroke-width="1.200"/><rect x="6" y="8" width="2.500" height="1.200" fill="#555"/></svg>
<div class="sep" style="left:590px;top:107px;height:20px"></div>
<svg class="ab" style="left:596px;top:109px" width="16" height="16" viewBox="0 0 16 16"><rect x="1" y="1" width="12" height="13" fill="none" stroke="#3c9ad8" stroke-width="1.100" stroke-dasharray="3.300 2.300"/><path d="M9 5V14L11 12L12.500 15.500L14 14.800L12.500 11.500H15Z" fill="#fff" stroke="#8a8a8a" stroke-width=".9"/></svg>
<svg class="ab" style="left:618px;top:109px" width="15" height="16" viewBox="0 0 15 16"><path d="M2 .5L9.500 11M12.500 .5L5 11" stroke="#7a7a7a" stroke-width="1.200"/><circle cx="3.300" cy="12.600" r="2.100" fill="#fff" stroke="#3c8cd0" stroke-width="1.100"/><circle cx="11.200" cy="12.600" r="2.100" fill="#fff" stroke="#3c8cd0" stroke-width="1.100"/></svg>
<svg class="ab" style="left:640px;top:110px" width="16" height="15" viewBox="0 0 16 15"><path d="M0.5 0.5H4.5L7.5 3.5V10.5H0.5Z" fill="#fff" stroke="#9a9a9a"/><path d="M2 3.500H5M2 5.500H5M2 7.500H5" stroke="#3c84b8"/><path d="M6.5 3.5H12.5L15.5 6.5V14.5H6.5Z" fill="#fff" stroke="#9a9a9a"/><path d="M8 7.500H13.500M8 9.500H13.500M8 11.500H13.500M8 13.500H13.500" stroke="#3c84b8"/></svg>
<svg class="ab" style="left:663px;top:109px" width="16" height="16" viewBox="0 0 16 16"><rect x="0" y="2" width="12" height="13" rx=".8" fill="#c08a5c"/><rect x="3.500" y=".5" width="5" height="2.500" fill="#fff" stroke="#8a8a8a"/><path d="M7.5 7.5H11.5L14.5 10.5V15.5H7.5Z" fill="#fff" stroke="#9a9a9a"/><path d="M9 11.500H11M9 13.500H13" stroke="#3c84b8"/></svg>
<svg class="ab" style="left:685px;top:109px" width="16" height="16" viewBox="0 0 16 16"><path d="M6.500 .5L.3 5.500L6.500 10.500Z" fill="#a887c8"/><path d="M5 5.500H9.500Q13.800 5.500 13.800 9.700Q13.800 13.300 9.500 14.200" fill="none" stroke="#a887c8" stroke-width="2.300"/></svg>
<svg class="ab" style="left:706px;top:109px" width="16" height="16" viewBox="0 0 16 16"><path d="M9.500 .5L15.700 5.500L9.500 10.500Z" fill="#a887c8"/><path d="M11 5.500H6.500Q2.200 5.500 2.200 9.700Q2.200 13.300 6.500 14.200" fill="none" stroke="#a887c8" stroke-width="2.300"/></svg>
<div class="sep" style="left:727px;top:107px;height:20px"></div>
<svg class="ab" style="left:734px;top:110px" width="15" height="14" viewBox="0 0 15 14"><path d="M7 .5H.5V9.500H3M9 2.500H2.500V11.500H7" fill="none" stroke="#d0a070" stroke-width="1"/><path d="M10.5 9.0L14 12.5" stroke="#9a9a9a" stroke-width="1.800"/><circle cx="8" cy="6.5" r="3.300" fill="#c8e4f4" stroke="#9a9a9a" stroke-width="1.200"/></svg>
<svg class="ab" style="left:756px;top:110px" width="16" height="15" viewBox="0 0 16 15"><path d="M7 .5H1.500V5M9 2.500H3.500V6M3 11.500H9" fill="none" stroke="#d0a070" stroke-width="1"/><path d="M.5 14L3.500 5.500L6.500 14M1.500 11H5.500" fill="none" stroke="#9a9a9a" stroke-width="1.200"/><path d="M11.5 9.0L15 12.5" stroke="#9a9a9a" stroke-width="1.800"/><circle cx="9" cy="6.5" r="3.300" fill="#c8e4f4" stroke="#9a9a9a" stroke-width="1.200"/></svg>
<div class="sep" style="left:776px;top:107px;height:20px"></div>
<div class="ab" style="left:783px;top:110px;font-size:12px;line-height:14px;color:#444;-webkit-text-stroke:.2px #444">a</div>
<svg class="ab" style="left:790px;top:110px" width="6" height="4" viewBox="0 0 6 4"><path d="M0 0H6L3 3.200Z" fill="#3c84c8"/></svg>
<div class="ab" style="left:806px;top:112px;font-size:10.500px;line-height:14px;color:#444;-webkit-text-stroke:.2px #444">A</div>
<svg class="ab" style="left:812px;top:110px" width="6" height="4" viewBox="0 0 6 4"><path d="M0 3.200H6L3 0Z" fill="#3c84c8"/></svg>
<div class="sep" style="left:825px;top:107px;height:20px"></div>
<svg class="ab" style="left:832px;top:109px" width="15" height="15" viewBox="0 0 15 15"><rect x=".5" y=".5" width="14" height="14" fill="#fff" stroke="#3c84c8" stroke-width="1.100"/><rect x="2.500" y="3.500" width="3" height="3" fill="none" stroke="#3c84c8" stroke-width=".9"/><rect x="2.500" y="8.500" width="3" height="3" fill="none" stroke="#3c84c8" stroke-width=".9"/><path d="M7.500 5H12.500M7.500 10H12.500" stroke="#3c84c8" stroke-width=".9"/><path d="M3.500 4.500L4.500 6L7 2.500" stroke="#333" stroke-width=".9" fill="none"/></svg>
<div class="ab" style="left:257px;top:128px;width:727px;height:292px;background:#fff;border-top:1px solid #b0b0b0;border-left:1px solid #a0a0a0"></div>
<div class="ab" style="left:258px;top:129px;width:53px;height:291px;background:#f0f0f0"></div>
<div class="ab" style="left:258px;top:129px;width:725px;height:17px;background:#ffffe0"></div>
<div class="ab" style="left:311px;top:129px;width:1px;height:291px;background:#e0e0e0"></div>
<div class="ln" style="top:130px">1</div>
<div class="code" style="top:131px">/*</div>
<div class="ln" style="top:147px">2</div>
<div class="code" style="top:148px">This is a sample script which shows how custom jars can be used inside AquaScript.</div>
<div class="ln" style="top:164px">3</div>
<div class="code" style="top:165px">This uses a Java class, com.example.Greeting which is bundled in jar-example-1.0.jar.</div>
<div class="ln" style="top:181px">4</div>
<div class="code" style="top:182px">Please make sure you do the following steps before executing this script,</div>
<div class="ln" style="top:198px">5</div>
<div class="ln" style="top:215px">6</div>
<div class="code" style="top:216px">Aqua Data Server:</div>
<div class="ln" style="top:232px">7</div>
<div class="code" style="top:233px">    Step 1) Copy jar-example-1.0.jar to &lt;aquadataserver install dir&gt;/tomcat/lib</div>
<div class="ln" style="top:249px">8</div>
<div class="code" style="top:250px">    Step 2) Restart Aqua Data Server</div>
<div class="ln" style="top:266px">9</div>
<div class="ln" style="top:283px">10</div>
<div class="code" style="top:284px">Aqua Data Studio:</div>
<div class="ln" style="top:300px">11</div>
<div class="code" style="top:301px">    Step 1) Copy jar-example-1.0.jar to &lt;aquadatastudio install dir&gt;/lib</div>
<div class="ln" style="top:317px">12</div>
<div class="code" style="top:318px">    Step 2) Restart Aqua Data Studio</div>
<div class="ln" style="top:334px">13</div>
<div class="code" style="top:335px">*/</div>
<div class="ln" style="top:351px">14</div>
<div class="ln" style="top:368px">15</div>
<div class="ln" style="top:385px">16</div>
<div class="code" style="top:386px">// Create an instance of the class com.ex<span>ample.Greeting to greet with "Hello"</span></div>
<div class="ln" style="top:402px">17</div>
<div class="code" style="top:403px">var g = new com.example.Greeting("Hello")<b style="color:#000">;</b></div>
<div class="ab" style="left:969px;top:286px;width:14px;height:2px;background:#cc4440"></div>
<div class="ab" style="left:969px;top:304px;width:14px;height:2px;background:#cc4440"></div>
<div class="ab" style="left:969px;top:331px;width:14px;height:2px;background:#cc4440"></div>
<div class="ab" style="left:969px;top:349px;width:14px;height:2px;background:#cc4440"></div>
<div class="ab" style="left:975px;top:146px;width:8px;height:150px;background:rgba(196,196,196,.8);border-radius:0 0 2px 2px"></div>
<svg class="ab" style="left:971px;top:131px" width="10" height="10" viewBox="0 0 10 10"><circle cx="5" cy="5" r="5" fill="#d2504c"/><rect x="4.200" y="1.800" width="1.600" height="4.200" fill="#fff"/><rect x="4.200" y="7" width="1.600" height="1.500" fill="#fff"/></svg>
<div class="ab" style="left:983px;top:128px;width:1px;height:292px;background:#a8a8a8"></div>
<div class="ab" style="left:984px;top:105px;width:1px;height:514px;background:#e8e8e8"></div>
<div class="ab" style="left:256px;top:420px;width:728px;height:1px;background:#c8c8c8"></div>
<div class="ab" style="left:256px;top:441px;width:728px;height:1px;background:#c0c0c0"></div>
<div class="t" style="left:859px;top:423px;letter-spacing:0.234px">1:1</div>
<div class="t" style="left:895px;top:423px;letter-spacing:-0.809px">CRLF</div>
<div class="t" style="left:940px;top:423px;letter-spacing:-0.274px">UTF-8</div>
<svg class="ab" style="left:922px;top:426px" width="5" height="9" viewBox="0 0 5 9"><path d="M.3 3.800L2.500 .8L4.700 3.800ZM.3 5.400L2.500 8.400L4.700 5.400Z" fill="#444"/></svg>
<svg class="ab" style="left:971.5px;top:426px" width="5" height="9" viewBox="0 0 5 9"><path d="M.3 3.800L2.500 .8L4.700 3.800ZM.3 5.400L2.500 8.400L4.700 5.400Z" fill="#444"/></svg>
<div class="ab" style="left:614px;top:444px;width:15px;height:0;border-top:1px dotted #888"></div>
<div class="ab" style="left:256px;top:469px;width:728px;height:150px;background:#f0f0f0;border-top:1px solid #909090;border-bottom:1px solid #a0a0a0"></div>
<div class="ab" style="left:256px;top:616px;width:727px;height:1px;background:#a8a8a8"></div>
<div class="ab" style="left:983px;top:470px;width:1px;height:147px;background:#a8a8a8"></div>
<div class="ab" style="left:258px;top:485px;width:360px;height:130px;background:#fff;border:1px solid #7a8692"></div>
<div class="ab" style="left:623px;top:485px;width:359px;height:130px;background:#fff;border:1px solid #7a8692"></div>
<div class="t" style="left:622px;top:470px;letter-spacing:-0.039px">Evaluate</div>
<div class="ab" style="left:627px;top:490px;font-family:'Liberation Mono',monospace;font-size:9px;color:#555;line-height:12px">%</div>
<div class="ab" style="left:620px;top:537px;width:0;height:16px;border-left:1px dotted #888"></div>
<div class="ab" style="left:9px;top:621px;width:979px;height:1px;background:#a8a8a8"></div>
<svg class="ab" style="left:40px;top:628px" width="12" height="9" viewBox="0 0 12 9"><rect x="0" y="0" width="12" height="9" fill="#ececec"/><path d="M0 4.200H12M0 6.500H12M0 8.700H12M.4 2V9M3.200 2V9M6 2V9M8.800 2V9M11.600 2V9" stroke="#b0b0b0" stroke-width=".8"/><rect x="0" y="0" width="12" height="2" fill="#4a9ad8"/></svg>
<div class="t" style="left:55px;top:624px;letter-spacing:0.042px">F5: Detail</div>
<div class="ab" style="left:9px;top:642px;width:979px;height:1px;background:#a0a0a0"></div>
<div class="ab" style="left:9px;top:643px;width:779px;height:20px;background:#f2f2f2"></div>
<div class="ab" style="left:9px;top:663px;width:979px;height:1px;background:#dcdcdc"></div>
<div class="t" style="left:22px;top:645px;letter-spacing:-0.229px">Local Database Servers / MS SQL Server</div>
<div class="ab" style="left:788px;top:642px;width:200px;height:21px;background:#f0f0f0;border:1px solid #9a9a9a"></div>
<div class="ab" style="left:790px;top:645px;width:168px;height:16px;background:#dcdcdc"></div>
<div class="ab" style="left:790px;top:645px;width:52px;height:16px;background:#b8b8b8"></div>
<div class="t" style="left:844px;top:645px;letter-spacing:-0.109px">182 : 574 : 672 MB</div>
<svg class="ab" style="left:972px;top:645px" width="14" height="15" viewBox="0 0 14 15"><path d="M4 2.500Q7 -0.500 10 2.500" fill="none" stroke="#888" stroke-width="1"/><rect x=".5" y="2.500" width="13" height="2" fill="#5aaae0" stroke="#2a7ac0"/><path d="M1.500 4.500H12.500L11.800 14.500H2.200Z" fill="#d8ecfa" stroke="#2a7ac0"/><path d="M4.500 6.500V12.500M7 6.500V12.500M9.500 6.500V12.500" stroke="#2a7ac0" stroke-width="1.300"/></svg>
<div class="ab" style="left:234px;top:258px;width:369px;height:409px;background:#f6f6f6;border:1px solid #858585;border-top-color:#a0a0a0;border-left-color:#a0a0a0"></div>
<div class="ab" style="left:237px;top:261px;width:363px;height:403px;background:#fff"></div>
<div class="ab" style="left:237px;top:261px;width:363px;height:22px;background:linear-gradient(#ccd5e6,#c6d0e2);border-top:1px solid #8e9ab2;border-bottom:1px solid #8e9ab2"></div>
<div class="t" style="left:241px;top:264px;letter-spacing:0.013px">Servers</div>
<svg class="ab" style="left:553px;top:266px" width="12" height="12" viewBox="0 0 12 12"><g fill="#7a7a7a"><circle cx="6" cy="6" r="4.200"/><rect x="5" y="0" width="2" height="12"/><rect x="0" y="5" width="12" height="2"/><rect x="5" y="0" width="2" height="12" transform="rotate(45 6 6)"/><rect x="5" y="0" width="2" height="12" transform="rotate(-45 6 6)"/></g><circle cx="6" cy="6" r="1.700" fill="#f4f4f4"/></svg><svg class="ab" style="left:567px;top:271px" width="5" height="3" viewBox="0 0 5 3"><path d="M0 0H5L2.500 3Z" fill="#7a7a7a"/></svg><svg class="ab" style="left:581px;top:266px" width="13" height="12" viewBox="0 0 13 12"><rect x=".5" y=".5" width="2.500" height="10.500" fill="#f4f4f4" stroke="#7a7a7a"/><rect x=".5" y=".5" width="2.500" height="5" fill="#8a8a8a"/><path d="M5 3.500H12" stroke="#7a7a7a" stroke-width="1"/><path d="M4.500 3.500L7.500 1.200V5.800Z" fill="#7a7a7a"/></svg>
<div class="dots" style="left:264px;top:297px;height:346px"></div>
<svg class="ab" style="left:241px;top:286px" width="9" height="9" viewBox="0 0 9 9"><rect x=".5" y=".5" width="8" height="8" rx="1.200" fill="#fdfdfd" stroke="#9a9a9a"/><path d="M2.500 4.500H6.500" stroke="#2c3e8c" stroke-width="1"/></svg>
<div class="hd" style="left:250px;top:290px;width:6px"></div>
<svg class="ab" style="left:258px;top:282px" width="16" height="16" viewBox="0 0 16 16"><rect x="1" y="1" width="8" height="1" fill="#b0b0b0"/><rect x="1" y="3" width="8" height="1" fill="#b0b0b0"/><rect x="1" y="5" width="8" height="1" fill="#b0b0b0"/><rect x="1" y="7" width="7" height="8" fill="#909090"/><circle cx="9.500" cy="8" r="5" fill="#3c8ce0" stroke="#2868c0" stroke-width=".8"/><path d="M7 5Q9 3.800 11.500 4.500Q13 6 11.500 7.500Q10.500 8 10.500 10.500L9 11Q8 9 7.500 7.500Q6 6.500 7 5Z" fill="#f4c840"/><path d="M5.500 6Q7 3.500 9.500 3.300" stroke="#b8dcfc" stroke-width=".9" fill="none"/></svg>
<div class="t" style="left:276px;top:282px;letter-spacing:-0.155px">Local Database Servers</div>
<svg class="ab" style="left:260px;top:302px" width="9" height="9" viewBox="0 0 9 9"><rect x=".5" y=".5" width="8" height="8" rx="1.200" fill="#fdfdfd" stroke="#9a9a9a"/><path d="M2.500 4.500H6.500" stroke="#2c3e8c" stroke-width="1"/><path d="M4.500 2.500V6.500" stroke="#2c3e8c" stroke-width="1"/></svg>
<div class="hd" style="left:269px;top:306px;width:6px"></div>
<svg class="ab" style="left:276px;top:298px" width="16" height="16" viewBox="0 0 16 16"><rect x="0" y=".5" width="8" height="1" fill="#a4a4a4"/><rect x="0" y="2.800" width="8" height="1" fill="#a4a4a4"/><rect x="0" y="5" width="8" height="1" fill="#a4a4a4"/><rect x="0" y="7" width="8" height="8" fill="#909090"/><rect x="4.500" y="11" width="1.500" height="1.500" fill="#5ae05a"/><path d="M12.83 3.83L12.83 5.37L11.71 5.39L11.30 6.38L12.08 7.19L10.99 8.28L10.18 7.50L9.19 7.91L9.17 9.03L7.63 9.03L7.61 7.91L6.62 7.50L5.81 8.28L4.72 7.19L5.50 6.38L5.09 5.39L3.97 5.37L3.97 3.83L5.09 3.81L5.50 2.82L4.72 2.01L5.81 0.92L6.62 1.70L7.61 1.29L7.63 0.17L9.17 0.17L9.19 1.29L10.18 1.70L10.99 0.92L12.08 2.01L11.30 2.82L11.71 3.81Z" fill="#fff4d4" stroke="#e09c20" stroke-width="1.300" stroke-linejoin="round"/><circle cx="8.400" cy="4.600" r="1.300" fill="#fff" stroke="#e09c20" stroke-width=".8"/><rect x="8.500" y="8.500" width="7" height="6.500" fill="#f8cc50" stroke="#d89c20"/><path d="M12 8.500V15" stroke="#d89c20"/><rect x="9.500" y="9.500" width="1.500" height="5" fill="#fde48a"/><rect x="13" y="9.500" width="1.500" height="5" fill="#fde48a"/></svg>
<div class="t" style="left:295px;top:298px;letter-spacing:-0.125px">Apache Hive</div>
<svg class="ab" style="left:260px;top:318px" width="9" height="9" viewBox="0 0 9 9"><rect x=".5" y=".5" width="8" height="8" rx="1.200" fill="#fdfdfd" stroke="#9a9a9a"/><path d="M2.500 4.500H6.500" stroke="#2c3e8c" stroke-width="1"/><path d="M4.500 2.500V6.500" stroke="#2c3e8c" stroke-width="1"/></svg>
<div class="hd" style="left:269px;top:322px;width:6px"></div>
<svg class="ab" style="left:276px;top:314px" width="16" height="16" viewBox="0 0 16 16"><rect x="0" y=".5" width="8" height="1" fill="#a4a4a4"/><rect x="0" y="2.800" width="8" height="1" fill="#a4a4a4"/><rect x="0" y="5" width="8" height="1" fill="#a4a4a4"/><rect x="0" y="7" width="8" height="8" fill="#909090"/><rect x="4.500" y="11" width="1.500" height="1.500" fill="#5ae05a"/><path d="M12.83 3.83L12.83 5.37L11.71 5.39L11.30 6.38L12.08 7.19L10.99 8.28L10.18 7.50L9.19 7.91L9.17 9.03L7.63 9.03L7.61 7.91L6.62 7.50L5.81 8.28L4.72 7.19L5.50 6.38L5.09 5.39L3.97 5.37L3.97 3.83L5.09 3.81L5.50 2.82L4.72 2.01L5.81 0.92L6.62 1.70L7.61 1.29L7.63 0.17L9.17 0.17L9.19 1.29L10.18 1.70L10.99 0.92L12.08 2.01L11.30 2.82L11.71 3.81Z" fill="#fff4d4" stroke="#e09c20" stroke-width="1.300" stroke-linejoin="round"/><circle cx="8.400" cy="4.600" r="1.300" fill="#fff" stroke="#e09c20" stroke-width=".8"/><rect x="8.500" y="8.500" width="7" height="6.500" fill="#f8cc50" stroke="#d89c20"/><path d="M12 8.500V15" stroke="#d89c20"/><rect x="9.500" y="9.500" width="1.500" height="5" fill="#fde48a"/><rect x="13" y="9.500" width="1.500" height="5" fill="#fde48a"/></svg>
<div class="t" style="left:295px;top:314px;letter-spacing:0.08px">Azure 12.0</div>
<svg class="ab" style="left:260px;top:334px" width="9" height="9" viewBox="0 0 9 9"><rect x=".5" y=".5" width="8" height="8" rx="1.200" fill="#fdfdfd" stroke="#9a9a9a"/><path d="M2.500 4.500H6.500" stroke="#2c3e8c" stroke-width="1"/><path d="M4.500 2.500V6.500" stroke="#2c3e8c" stroke-width="1"/></svg>
<div class="hd" style="left:269px;top:338px;width:6px"></div>
<svg class="ab" style="left:276px;top:330px" width="16" height="16" viewBox="0 0 16 16"><rect x="0" y=".5" width="8" height="1" fill="#a4a4a4"/><rect x="0" y="2.800" width="8" height="1" fill="#a4a4a4"/><rect x="0" y="5" width="8" height="1" fill="#a4a4a4"/><rect x="0" y="7" width="8" height="8" fill="#909090"/><rect x="4.500" y="11" width="1.500" height="1.500" fill="#5ae05a"/><path d="M12.83 3.83L12.83 5.37L11.71 5.39L11.30 6.38L12.08 7.19L10.99 8.28L10.18 7.50L9.19 7.91L9.17 9.03L7.63 9.03L7.61 7.91L6.62 7.50L5.81 8.28L4.72 7.19L5.50 6.38L5.09 5.39L3.97 5.37L3.97 3.83L5.09 3.81L5.50 2.82L4.72 2.01L5.81 0.92L6.62 1.70L7.61 1.29L7.63 0.17L9.17 0.17L9.19 1.29L10.18 1.70L10.99 0.92L12.08 2.01L11.30 2.82L11.71 3.81Z" fill="#fff4d4" stroke="#e09c20" stroke-width="1.300" stroke-linejoin="round"/><circle cx="8.400" cy="4.600" r="1.300" fill="#fff" stroke="#e09c20" stroke-width=".8"/><rect x="8.500" y="8.500" width="7" height="6.500" fill="#f8cc50" stroke="#d89c20"/><path d="M12 8.500V15" stroke="#d89c20"/><rect x="9.500" y="9.500" width="1.500" height="5" fill="#fde48a"/><rect x="13" y="9.500" width="1.500" height="5" fill="#fde48a"/></svg>
<div class="t" style="left:295px;top:330px;letter-spacing:0.018px">BigQuery</div>
<svg class="ab" style="left:260px;top:350px" width="9" height="9" viewBox="0 0 9 9"><rect x=".5" y=".5" width="8" height="8" rx="1.200" fill="#fdfdfd" stroke="#9a9a9a"/><path d="M2.500 4.500H6.500" stroke="#2c3e8c" stroke-width="1"/><path d="M4.500 2.500V6.500" stroke="#2c3e8c" stroke-width="1"/></svg>
<div class="hd" style="left:269px;top:354px;width:6px"></div>
<svg class="ab" style="left:276px;top:346px" width="16" height="16" viewBox="0 0 16 16"><rect x="0" y=".5" width="8" height="1" fill="#a4a4a4"/><rect x="0" y="2.800" width="8" height="1" fill="#a4a4a4"/><rect x="0" y="5" width="8" height="1" fill="#a4a4a4"/><rect x="0" y="7" width="8" height="8" fill="#909090"/><rect x="4.500" y="11" width="1.500" height="1.500" fill="#5ae05a"/><path d="M12.83 3.83L12.83 5.37L11.71 5.39L11.30 6.38L12.08 7.19L10.99 8.28L10.18 7.50L9.19 7.91L9.17 9.03L7.63 9.03L7.61 7.91L6.62 7.50L5.81 8.28L4.72 7.19L5.50 6.38L5.09 5.39L3.97 5.37L3.97 3.83L5.09 3.81L5.50 2.82L4.72 2.01L5.81 0.92L6.62 1.70L7.61 1.29L7.63 0.17L9.17 0.17L9.19 1.29L10.18 1.70L10.99 0.92L12.08 2.01L11.30 2.82L11.71 3.81Z" fill="#fff4d4" stroke="#e09c20" stroke-width="1.300" stroke-linejoin="round"/><circle cx="8.400" cy="4.600" r="1.300" fill="#fff" stroke="#e09c20" stroke-width=".8"/><rect x="8.500" y="8.500" width="7" height="6.500" fill="#f8cc50" stroke="#d89c20"/><path d="M12 8.500V15" stroke="#d89c20"/><rect x="9.500" y="9.500" width="1.500" height="5" fill="#fde48a"/><rect x="13" y="9.500" width="1.500" height="5" fill="#fde48a"/></svg>
<div class="t" style="left:295px;top:346px;letter-spacing:-0.118px">ClouderaImpala</div>
<svg class="ab" style="left:260px;top:366px" width="9" height="9" viewBox="0 0 9 9"><rect x=".5" y=".5" width="8" height="8" rx="1.200" fill="#fdfdfd" stroke="#9a9a9a"/><path d="M2.500 4.500H6.500" stroke="#2c3e8c" stroke-width="1"/><path d="M4.500 2.500V6.500" stroke="#2c3e8c" stroke-width="1"/></svg>
<div class="hd" style="left:269px;top:370px;width:6px"></div>
<svg class="ab" style="left:276px;top:362px" width="16" height="16" viewBox="0 0 16 16"><rect x="0" y=".5" width="8" height="1" fill="#a4a4a4"/><rect x="0" y="2.800" width="8" height="1" fill="#a4a4a4"/><rect x="0" y="5" width="8" height="1" fill="#a4a4a4"/><rect x="0" y="7" width="8" height="8" fill="#909090"/><rect x="4.500" y="11" width="1.500" height="1.500" fill="#5ae05a"/><path d="M12.83 3.83L12.83 5.37L11.71 5.39L11.30 6.38L12.08 7.19L10.99 8.28L10.18 7.50L9.19 7.91L9.17 9.03L7.63 9.03L7.61 7.91L6.62 7.50L5.81 8.28L4.72 7.19L5.50 6.38L5.09 5.39L3.97 5.37L3.97 3.83L5.09 3.81L5.50 2.82L4.72 2.01L5.81 0.92L6.62 1.70L7.61 1.29L7.63 0.17L9.17 0.17L9.19 1.29L10.18 1.70L10.99 0.92L12.08 2.01L11.30 2.82L11.71 3.81Z" fill="#fff4d4" stroke="#e09c20" stroke-width="1.300" stroke-linejoin="round"/><circle cx="8.400" cy="4.600" r="1.300" fill="#fff" stroke="#e09c20" stroke-width=".8"/><rect x="8.500" y="8.500" width="7" height="6.500" fill="#f8cc50" stroke="#d89c20"/><path d="M12 8.500V15" stroke="#d89c20"/><rect x="9.500" y="9.500" width="1.500" height="5" fill="#fde48a"/><rect x="13" y="9.500" width="1.500" height="5" fill="#fde48a"/></svg>
<div class="t" style="left:295px;top:362px;letter-spacing:-0.097px">Greenplum 4.3</div>
<svg class="ab" style="left:260px;top:382px" width="9" height="9" viewBox="0 0 9 9"><rect x=".5" y=".5" width="8" height="8" rx="1.200" fill="#fdfdfd" stroke="#9a9a9a"/><path d="M2.500 4.500H6.500" stroke="#2c3e8c" stroke-width="1"/><path d="M4.500 2.500V6.500" stroke="#2c3e8c" stroke-width="1"/></svg>
<div class="hd" style="left:269px;top:386px;width:6px"></div>
<svg class="ab" style="left:276px;top:378px" width="16" height="16" viewBox="0 0 16 16"><rect x="0" y=".5" width="8" height="1" fill="#a4a4a4"/><rect x="0" y="2.800" width="8" height="1" fill="#a4a4a4"/><rect x="0" y="5" width="8" height="1" fill="#a4a4a4"/><rect x="0" y="7" width="8" height="8" fill="#909090"/><rect x="4.500" y="11" width="1.500" height="1.500" fill="#5ae05a"/><path d="M12.83 3.83L12.83 5.37L11.71 5.39L11.30 6.38L12.08 7.19L10.99 8.28L10.18 7.50L9.19 7.91L9.17 9.03L7.63 9.03L7.61 7.91L6.62 7.50L5.81 8.28L4.72 7.19L5.50 6.38L5.09 5.39L3.97 5.37L3.97 3.83L5.09 3.81L5.50 2.82L4.72 2.01L5.81 0.92L6.62 1.70L7.61 1.29L7.63 0.17L9.17 0.17L9.19 1.29L10.18 1.70L10.99 0.92L12.08 2.01L11.30 2.82L11.71 3.81Z" fill="#fff4d4" stroke="#e09c20" stroke-width="1.300" stroke-linejoin="round"/><circle cx="8.400" cy="4.600" r="1.300" fill="#fff" stroke="#e09c20" stroke-width=".8"/><rect x="8.500" y="8.500" width="7" height="6.500" fill="#f8cc50" stroke="#d89c20"/><path d="M12 8.500V15" stroke="#d89c20"/><rect x="9.500" y="9.500" width="1.500" height="5" fill="#fde48a"/><rect x="13" y="9.500" width="1.500" height="5" fill="#fde48a"/></svg>
<div class="t" style="left:295px;top:378px;letter-spacing:-0.381px">Mongo_DB</div>
<svg class="ab" style="left:260px;top:398px" width="9" height="9" viewBox="0 0 9 9"><rect x=".5" y=".5" width="8" height="8" rx="1.200" fill="#fdfdfd" stroke="#9a9a9a"/><path d="M2.500 4.500H6.500" stroke="#2c3e8c" stroke-width="1"/><path d="M4.500 2.500V6.500" stroke="#2c3e8c" stroke-width="1"/></svg>
<div class="hd" style="left:269px;top:402px;width:6px"></div>
<svg class="ab" style="left:276px;top:394px" width="16" height="16" viewBox="0 0 16 16"><rect x="0" y=".5" width="8" height="1" fill="#a4a4a4"/><rect x="0" y="2.800" width="8" height="1" fill="#a4a4a4"/><rect x="0" y="5" width="8" height="1" fill="#a4a4a4"/><rect x="0" y="7" width="8" height="8" fill="#909090"/><rect x="4.500" y="11" width="1.500" height="1.500" fill="#5ae05a"/><path d="M12.83 3.83L12.83 5.37L11.71 5.39L11.30 6.38L12.08 7.19L10.99 8.28L10.18 7.50L9.19 7.91L9.17 9.03L7.63 9.03L7.61 7.91L6.62 7.50L5.81 8.28L4.72 7.19L5.50 6.38L5.09 5.39L3.97 5.37L3.97 3.83L5.09 3.81L5.50 2.82L4.72 2.01L5.81 0.92L6.62 1.70L7.61 1.29L7.63 0.17L9.17 0.17L9.19 1.29L10.18 1.70L10.99 0.92L12.08 2.01L11.30 2.82L11.71 3.81Z" fill="#fff4d4" stroke="#e09c20" stroke-width="1.300" stroke-linejoin="round"/><circle cx="8.400" cy="4.600" r="1.300" fill="#fff" stroke="#e09c20" stroke-width=".8"/><rect x="8.500" y="8.500" width="7" height="6.500" fill="#f8cc50" stroke="#d89c20"/><path d="M12 8.500V15" stroke="#d89c20"/><rect x="9.500" y="9.500" width="1.500" height="5" fill="#fde48a"/><rect x="13" y="9.500" width="1.500" height="5" fill="#fde48a"/></svg>
<div class="t" style="left:295px;top:394px;letter-spacing:-0.275px">MongoDB</div>
<svg class="ab" style="left:260px;top:414px" width="9" height="9" viewBox="0 0 9 9"><rect x=".5" y=".5" width="8" height="8" rx="1.200" fill="#fdfdfd" stroke="#9a9a9a"/><path d="M2.500 4.500H6.500" stroke="#2c3e8c" stroke-width="1"/><path d="M4.500 2.500V6.500" stroke="#2c3e8c" stroke-width="1"/></svg>
<div class="hd" style="left:269px;top:418px;width:6px"></div>
<svg class="ab" style="left:276px;top:410px" width="16" height="16" viewBox="0 0 16 16"><rect x="0" y=".5" width="8" height="1" fill="#a4a4a4"/><rect x="0" y="2.800" width="8" height="1" fill="#a4a4a4"/><rect x="0" y="5" width="8" height="1" fill="#a4a4a4"/><rect x="0" y="7" width="8" height="8" fill="#909090"/><rect x="4.500" y="11" width="1.500" height="1.500" fill="#5ae05a"/><path d="M12.83 3.83L12.83 5.37L11.71 5.39L11.30 6.38L12.08 7.19L10.99 8.28L10.18 7.50L9.19 7.91L9.17 9.03L7.63 9.03L7.61 7.91L6.62 7.50L5.81 8.28L4.72 7.19L5.50 6.38L5.09 5.39L3.97 5.37L3.97 3.83L5.09 3.81L5.50 2.82L4.72 2.01L5.81 0.92L6.62 1.70L7.61 1.29L7.63 0.17L9.17 0.17L9.19 1.29L10.18 1.70L10.99 0.92L12.08 2.01L11.30 2.82L11.71 3.81Z" fill="#fff4d4" stroke="#e09c20" stroke-width="1.300" stroke-linejoin="round"/><circle cx="8.400" cy="4.600" r="1.300" fill="#fff" stroke="#e09c20" stroke-width=".8"/><rect x="8.500" y="8.500" width="7" height="6.500" fill="#f8cc50" stroke="#d89c20"/><path d="M12 8.500V15" stroke="#d89c20"/><rect x="9.500" y="9.500" width="1.500" height="5" fill="#fde48a"/><rect x="13" y="9.500" width="1.500" height="5" fill="#fde48a"/></svg>
<div class="t" style="left:295px;top:410px;letter-spacing:-0.496px">MS Excel</div>
<svg class="ab" style="left:260px;top:430px" width="9" height="9" viewBox="0 0 9 9"><rect x=".5" y=".5" width="8" height="8" rx="1.200" fill="#fdfdfd" stroke="#9a9a9a"/><path d="M2.500 4.500H6.500" stroke="#2c3e8c" stroke-width="1"/><path d="M4.500 2.500V6.500" stroke="#2c3e8c" stroke-width="1"/></svg>
<div class="hd" style="left:269px;top:434px;width:6px"></div>
<svg class="ab" style="left:276px;top:426px" width="16" height="16" viewBox="0 0 16 16"><rect x="0" y=".5" width="8" height="1" fill="#a4a4a4"/><rect x="0" y="2.800" width="8" height="1" fill="#a4a4a4"/><rect x="0" y="5" width="8" height="1" fill="#a4a4a4"/><rect x="0" y="7" width="8" height="8" fill="#909090"/><rect x="4.500" y="11" width="1.500" height="1.500" fill="#5ae05a"/><path d="M12.83 3.83L12.83 5.37L11.71 5.39L11.30 6.38L12.08 7.19L10.99 8.28L10.18 7.50L9.19 7.91L9.17 9.03L7.63 9.03L7.61 7.91L6.62 7.50L5.81 8.28L4.72 7.19L5.50 6.38L5.09 5.39L3.97 5.37L3.97 3.83L5.09 3.81L5.50 2.82L4.72 2.01L5.81 0.92L6.62 1.70L7.61 1.29L7.63 0.17L9.17 0.17L9.19 1.29L10.18 1.70L10.99 0.92L12.08 2.01L11.30 2.82L11.71 3.81Z" fill="#fff4d4" stroke="#e09c20" stroke-width="1.300" stroke-linejoin="round"/><circle cx="8.400" cy="4.600" r="1.300" fill="#fff" stroke="#e09c20" stroke-width=".8"/><rect x="8.500" y="8.500" width="7" height="6.500" fill="#f8cc50" stroke="#d89c20"/><path d="M12 8.500V15" stroke="#d89c20"/><rect x="9.500" y="9.500" width="1.500" height="5" fill="#fde48a"/><rect x="13" y="9.500" width="1.500" height="5" fill="#fde48a"/></svg>
<div class="t" style="left:295px;top:426px;letter-spacing:-0.335px">MS SQL 2012</div>
<svg class="ab" style="left:260px;top:446px" width="9" height="9" viewBox="0 0 9 9"><rect x=".5" y=".5" width="8" height="8" rx="1.200" fill="#fdfdfd" stroke="#9a9a9a"/><path d="M2.500 4.500H6.500" stroke="#2c3e8c" stroke-width="1"/><path d="M4.500 2.500V6.500" stroke="#2c3e8c" stroke-width="1"/></svg>
<div class="hd" style="left:269px;top:450px;width:6px"></div>
<svg class="ab" style="left:276px;top:442px" width="16" height="16" viewBox="0 0 16 16"><rect x="0" y=".5" width="8" height="1" fill="#a4a4a4"/><rect x="0" y="2.800" width="8" height="1" fill="#a4a4a4"/><rect x="0" y="5" width="8" height="1" fill="#a4a4a4"/><rect x="0" y="7" width="8" height="8" fill="#909090"/><rect x="4.500" y="11" width="1.500" height="1.500" fill="#5ae05a"/><path d="M12.83 3.83L12.83 5.37L11.71 5.39L11.30 6.38L12.08 7.19L10.99 8.28L10.18 7.50L9.19 7.91L9.17 9.03L7.63 9.03L7.61 7.91L6.62 7.50L5.81 8.28L4.72 7.19L5.50 6.38L5.09 5.39L3.97 5.37L3.97 3.83L5.09 3.81L5.50 2.82L4.72 2.01L5.81 0.92L6.62 1.70L7.61 1.29L7.63 0.17L9.17 0.17L9.19 1.29L10.18 1.70L10.99 0.92L12.08 2.01L11.30 2.82L11.71 3.81Z" fill="#fff4d4" stroke="#e09c20" stroke-width="1.300" stroke-linejoin="round"/><circle cx="8.400" cy="4.600" r="1.300" fill="#fff" stroke="#e09c20" stroke-width=".8"/><path d="M7.700 5.500L14 10.700L7.700 16Z" fill="#2cae3c"/></svg>
<div class="t sel" style="left:295px;top:442px;padding:0;width:75px;letter-spacing:-0.394px">MS SQL Server</div>
<svg class="ab" style="left:260px;top:462px" width="9" height="9" viewBox="0 0 9 9"><rect x=".5" y=".5" width="8" height="8" rx="1.200" fill="#fdfdfd" stroke="#9a9a9a"/><path d="M2.500 4.500H6.500" stroke="#2c3e8c" stroke-width="1"/><path d="M4.500 2.500V6.500" stroke="#2c3e8c" stroke-width="1"/></svg>
<div class="hd" style="left:269px;top:466px;width:6px"></div>
<svg class="ab" style="left:276px;top:458px" width="16" height="16" viewBox="0 0 16 16"><rect x="0" y=".5" width="8" height="1" fill="#a4a4a4"/><rect x="0" y="2.800" width="8" height="1" fill="#a4a4a4"/><rect x="0" y="5" width="8" height="1" fill="#a4a4a4"/><rect x="0" y="7" width="8" height="8" fill="#909090"/><rect x="4.500" y="11" width="1.500" height="1.500" fill="#5ae05a"/><path d="M12.83 3.83L12.83 5.37L11.71 5.39L11.30 6.38L12.08 7.19L10.99 8.28L10.18 7.50L9.19 7.91L9.17 9.03L7.63 9.03L7.61 7.91L6.62 7.50L5.81 8.28L4.72 7.19L5.50 6.38L5.09 5.39L3.97 5.37L3.97 3.83L5.09 3.81L5.50 2.82L4.72 2.01L5.81 0.92L6.62 1.70L7.61 1.29L7.63 0.17L9.17 0.17L9.19 1.29L10.18 1.70L10.99 0.92L12.08 2.01L11.30 2.82L11.71 3.81Z" fill="#fff4d4" stroke="#e09c20" stroke-width="1.300" stroke-linejoin="round"/><circle cx="8.400" cy="4.600" r="1.300" fill="#fff" stroke="#e09c20" stroke-width=".8"/><rect x="8.500" y="8.500" width="7" height="6.500" fill="#f8cc50" stroke="#d89c20"/><path d="M12 8.500V15" stroke="#d89c20"/><rect x="9.500" y="9.500" width="1.500" height="5" fill="#fde48a"/><rect x="13" y="9.500" width="1.500" height="5" fill="#fde48a"/></svg>
<div class="t" style="left:295px;top:458px;letter-spacing:-0.637px">MySQL</div>
<svg class="ab" style="left:260px;top:478px" width="9" height="9" viewBox="0 0 9 9"><rect x=".5" y=".5" width="8" height="8" rx="1.200" fill="#fdfdfd" stroke="#9a9a9a"/><path d="M2.500 4.500H6.500" stroke="#2c3e8c" stroke-width="1"/><path d="M4.500 2.500V6.500" stroke="#2c3e8c" stroke-width="1"/></svg>
<div class="hd" style="left:269px;top:482px;width:6px"></div>
<svg class="ab" style="left:276px;top:474px" width="16" height="16" viewBox="0 0 16 16"><rect x="0" y=".5" width="8" height="1" fill="#a4a4a4"/><rect x="0" y="2.800" width="8" height="1" fill="#a4a4a4"/><rect x="0" y="5" width="8" height="1" fill="#a4a4a4"/><rect x="0" y="7" width="8" height="8" fill="#909090"/><rect x="4.500" y="11" width="1.500" height="1.500" fill="#5ae05a"/><path d="M12.83 3.83L12.83 5.37L11.71 5.39L11.30 6.38L12.08 7.19L10.99 8.28L10.18 7.50L9.19 7.91L9.17 9.03L7.63 9.03L7.61 7.91L6.62 7.50L5.81 8.28L4.72 7.19L5.50 6.38L5.09 5.39L3.97 5.37L3.97 3.83L5.09 3.81L5.50 2.82L4.72 2.01L5.81 0.92L6.62 1.70L7.61 1.29L7.63 0.17L9.17 0.17L9.19 1.29L10.18 1.70L10.99 0.92L12.08 2.01L11.30 2.82L11.71 3.81Z" fill="#fff4d4" stroke="#e09c20" stroke-width="1.300" stroke-linejoin="round"/><circle cx="8.400" cy="4.600" r="1.300" fill="#fff" stroke="#e09c20" stroke-width=".8"/><rect x="8.500" y="8.500" width="7" height="6.500" fill="#f8cc50" stroke="#d89c20"/><path d="M12 8.500V15" stroke="#d89c20"/><rect x="9.500" y="9.500" width="1.500" height="5" fill="#fde48a"/><rect x="13" y="9.500" width="1.500" height="5" fill="#fde48a"/></svg>
<div class="t" style="left:295px;top:474px;letter-spacing:-0.081px">Oracle 10g</div>
<svg class="ab" style="left:260px;top:494px" width="9" height="9" viewBox="0 0 9 9"><rect x=".5" y=".5" width="8" height="8" rx="1.200" fill="#fdfdfd" stroke="#9a9a9a"/><path d="M2.500 4.500H6.500" stroke="#2c3e8c" stroke-width="1"/><path d="M4.500 2.500V6.500" stroke="#2c3e8c" stroke-width="1"/></svg>
<div class="hd" style="left:269px;top:498px;width:6px"></div>
<svg class="ab" style="left:276px;top:490px" width="16" height="16" viewBox="0 0 16 16"><rect x="0" y=".5" width="8" height="1" fill="#a4a4a4"/><rect x="0" y="2.800" width="8" height="1" fill="#a4a4a4"/><rect x="0" y="5" width="8" height="1" fill="#a4a4a4"/><rect x="0" y="7" width="8" height="8" fill="#909090"/><rect x="4.500" y="11" width="1.500" height="1.500" fill="#5ae05a"/><path d="M12.83 3.83L12.83 5.37L11.71 5.39L11.30 6.38L12.08 7.19L10.99 8.28L10.18 7.50L9.19 7.91L9.17 9.03L7.63 9.03L7.61 7.91L6.62 7.50L5.81 8.28L4.72 7.19L5.50 6.38L5.09 5.39L3.97 5.37L3.97 3.83L5.09 3.81L5.50 2.82L4.72 2.01L5.81 0.92L6.62 1.70L7.61 1.29L7.63 0.17L9.17 0.17L9.19 1.29L10.18 1.70L10.99 0.92L12.08 2.01L11.30 2.82L11.71 3.81Z" fill="#fff4d4" stroke="#e09c20" stroke-width="1.300" stroke-linejoin="round"/><circle cx="8.400" cy="4.600" r="1.300" fill="#fff" stroke="#e09c20" stroke-width=".8"/><rect x="8.500" y="8.500" width="7" height="6.500" fill="#f8cc50" stroke="#d89c20"/><path d="M12 8.500V15" stroke="#d89c20"/><rect x="9.500" y="9.500" width="1.500" height="5" fill="#fde48a"/><rect x="13" y="9.500" width="1.500" height="5" fill="#fde48a"/></svg>
<div class="t" style="left:295px;top:490px;letter-spacing:-0.12px">Oracle 12c</div>
<svg class="ab" style="left:260px;top:510px" width="9" height="9" viewBox="0 0 9 9"><rect x=".5" y=".5" width="8" height="8" rx="1.200" fill="#fdfdfd" stroke="#9a9a9a"/><path d="M2.500 4.500H6.500" stroke="#2c3e8c" stroke-width="1"/><path d="M4.500 2.500V6.500" stroke="#2c3e8c" stroke-width="1"/></svg>
<div class="hd" style="left:269px;top:514px;width:6px"></div>
<svg class="ab" style="left:276px;top:506px" width="16" height="16" viewBox="0 0 16 16"><rect x="0" y=".5" width="8" height="1" fill="#a4a4a4"/><rect x="0" y="2.800" width="8" height="1" fill="#a4a4a4"/><rect x="0" y="5" width="8" height="1" fill="#a4a4a4"/><rect x="0" y="7" width="8" height="8" fill="#909090"/><rect x="4.500" y="11" width="1.500" height="1.500" fill="#5ae05a"/><path d="M12.83 3.83L12.83 5.37L11.71 5.39L11.30 6.38L12.08 7.19L10.99 8.28L10.18 7.50L9.19 7.91L9.17 9.03L7.63 9.03L7.61 7.91L6.62 7.50L5.81 8.28L4.72 7.19L5.50 6.38L5.09 5.39L3.97 5.37L3.97 3.83L5.09 3.81L5.50 2.82L4.72 2.01L5.81 0.92L6.62 1.70L7.61 1.29L7.63 0.17L9.17 0.17L9.19 1.29L10.18 1.70L10.99 0.92L12.08 2.01L11.30 2.82L11.71 3.81Z" fill="#fff4d4" stroke="#e09c20" stroke-width="1.300" stroke-linejoin="round"/><circle cx="8.400" cy="4.600" r="1.300" fill="#fff" stroke="#e09c20" stroke-width=".8"/><rect x="8.500" y="8.500" width="7" height="6.500" fill="#f8cc50" stroke="#d89c20"/><path d="M12 8.500V15" stroke="#d89c20"/><rect x="9.500" y="9.500" width="1.500" height="5" fill="#fde48a"/><rect x="13" y="9.500" width="1.500" height="5" fill="#fde48a"/></svg>
<div class="t" style="left:295px;top:506px;letter-spacing:-0.292px">PostgreSQL</div>
<svg class="ab" style="left:260px;top:526px" width="9" height="9" viewBox="0 0 9 9"><rect x=".5" y=".5" width="8" height="8" rx="1.200" fill="#fdfdfd" stroke="#9a9a9a"/><path d="M2.500 4.500H6.500" stroke="#2c3e8c" stroke-width="1"/><path d="M4.500 2.500V6.500" stroke="#2c3e8c" stroke-width="1"/></svg>
<div class="hd" style="left:269px;top:530px;width:6px"></div>
<svg class="ab" style="left:276px;top:522px" width="16" height="16" viewBox="0 0 16 16"><rect x="0" y=".5" width="8" height="1" fill="#a4a4a4"/><rect x="0" y="2.800" width="8" height="1" fill="#a4a4a4"/><rect x="0" y="5" width="8" height="1" fill="#a4a4a4"/><rect x="0" y="7" width="8" height="8" fill="#909090"/><rect x="4.500" y="11" width="1.500" height="1.500" fill="#5ae05a"/><path d="M12.83 3.83L12.83 5.37L11.71 5.39L11.30 6.38L12.08 7.19L10.99 8.28L10.18 7.50L9.19 7.91L9.17 9.03L7.63 9.03L7.61 7.91L6.62 7.50L5.81 8.28L4.72 7.19L5.50 6.38L5.09 5.39L3.97 5.37L3.97 3.83L5.09 3.81L5.50 2.82L4.72 2.01L5.81 0.92L6.62 1.70L7.61 1.29L7.63 0.17L9.17 0.17L9.19 1.29L10.18 1.70L10.99 0.92L12.08 2.01L11.30 2.82L11.71 3.81Z" fill="#fff4d4" stroke="#e09c20" stroke-width="1.300" stroke-linejoin="round"/><circle cx="8.400" cy="4.600" r="1.300" fill="#fff" stroke="#e09c20" stroke-width=".8"/><rect x="8.500" y="8.500" width="7" height="6.500" fill="#f8cc50" stroke="#d89c20"/><path d="M12 8.500V15" stroke="#d89c20"/><rect x="9.500" y="9.500" width="1.500" height="5" fill="#fde48a"/><rect x="13" y="9.500" width="1.500" height="5" fill="#fde48a"/></svg>
<div class="t" style="left:295px;top:522px;letter-spacing:0.118px">Redshift</div>
<svg class="ab" style="left:260px;top:542px" width="9" height="9" viewBox="0 0 9 9"><rect x=".5" y=".5" width="8" height="8" rx="1.200" fill="#fdfdfd" stroke="#9a9a9a"/><path d="M2.500 4.500H6.500" stroke="#2c3e8c" stroke-width="1"/><path d="M4.500 2.500V6.500" stroke="#2c3e8c" stroke-width="1"/></svg>
<div class="hd" style="left:269px;top:546px;width:6px"></div>
<svg class="ab" style="left:276px;top:538px" width="16" height="16" viewBox="0 0 16 16"><rect x="0" y=".5" width="8" height="1" fill="#a4a4a4"/><rect x="0" y="2.800" width="8" height="1" fill="#a4a4a4"/><rect x="0" y="5" width="8" height="1" fill="#a4a4a4"/><rect x="0" y="7" width="8" height="8" fill="#909090"/><rect x="4.500" y="11" width="1.500" height="1.500" fill="#5ae05a"/><path d="M12.83 3.83L12.83 5.37L11.71 5.39L11.30 6.38L12.08 7.19L10.99 8.28L10.18 7.50L9.19 7.91L9.17 9.03L7.63 9.03L7.61 7.91L6.62 7.50L5.81 8.28L4.72 7.19L5.50 6.38L5.09 5.39L3.97 5.37L3.97 3.83L5.09 3.81L5.50 2.82L4.72 2.01L5.81 0.92L6.62 1.70L7.61 1.29L7.63 0.17L9.17 0.17L9.19 1.29L10.18 1.70L10.99 0.92L12.08 2.01L11.30 2.82L11.71 3.81Z" fill="#fff4d4" stroke="#e09c20" stroke-width="1.300" stroke-linejoin="round"/><circle cx="8.400" cy="4.600" r="1.300" fill="#fff" stroke="#e09c20" stroke-width=".8"/><rect x="8.500" y="8.500" width="7" height="6.500" fill="#f8cc50" stroke="#d89c20"/><path d="M12 8.500V15" stroke="#d89c20"/><rect x="9.500" y="9.500" width="1.500" height="5" fill="#fde48a"/><rect x="13" y="9.500" width="1.500" height="5" fill="#fde48a"/></svg>
<div class="t" style="left:295px;top:538px;letter-spacing:-0.424px">Spark SQL</div>
<svg class="ab" style="left:260px;top:558px" width="9" height="9" viewBox="0 0 9 9"><rect x=".5" y=".5" width="8" height="8" rx="1.200" fill="#fdfdfd" stroke="#9a9a9a"/><path d="M2.500 4.500H6.500" stroke="#2c3e8c" stroke-width="1"/><path d="M4.500 2.500V6.500" stroke="#2c3e8c" stroke-width="1"/></svg>
<div class="hd" style="left:269px;top:562px;width:6px"></div>
<svg class="ab" style="left:276px;top:554px" width="16" height="16" viewBox="0 0 16 16"><rect x="0" y=".5" width="8" height="1" fill="#a4a4a4"/><rect x="0" y="2.800" width="8" height="1" fill="#a4a4a4"/><rect x="0" y="5" width="8" height="1" fill="#a4a4a4"/><rect x="0" y="7" width="8" height="8" fill="#909090"/><rect x="4.500" y="11" width="1.500" height="1.500" fill="#5ae05a"/><path d="M12.83 3.83L12.83 5.37L11.71 5.39L11.30 6.38L12.08 7.19L10.99 8.28L10.18 7.50L9.19 7.91L9.17 9.03L7.63 9.03L7.61 7.91L6.62 7.50L5.81 8.28L4.72 7.19L5.50 6.38L5.09 5.39L3.97 5.37L3.97 3.83L5.09 3.81L5.50 2.82L4.72 2.01L5.81 0.92L6.62 1.70L7.61 1.29L7.63 0.17L9.17 0.17L9.19 1.29L10.18 1.70L10.99 0.92L12.08 2.01L11.30 2.82L11.71 3.81Z" fill="#fff4d4" stroke="#e09c20" stroke-width="1.300" stroke-linejoin="round"/><circle cx="8.400" cy="4.600" r="1.300" fill="#fff" stroke="#e09c20" stroke-width=".8"/><rect x="8.500" y="8.500" width="7" height="6.500" fill="#f8cc50" stroke="#d89c20"/><path d="M12 8.500V15" stroke="#d89c20"/><rect x="9.500" y="9.500" width="1.500" height="5" fill="#fde48a"/><rect x="13" y="9.500" width="1.500" height="5" fill="#fde48a"/></svg>
<div class="t" style="left:295px;top:554px;letter-spacing:-0.273px">SQLite</div>
<svg class="ab" style="left:260px;top:574px" width="9" height="9" viewBox="0 0 9 9"><rect x=".5" y=".5" width="8" height="8" rx="1.200" fill="#fdfdfd" stroke="#9a9a9a"/><path d="M2.500 4.500H6.500" stroke="#2c3e8c" stroke-width="1"/><path d="M4.500 2.500V6.500" stroke="#2c3e8c" stroke-width="1"/></svg>
<div class="hd" style="left:269px;top:578px;width:6px"></div>
<svg class="ab" style="left:276px;top:570px" width="16" height="16" viewBox="0 0 16 16"><rect x="0" y=".5" width="8" height="1" fill="#a4a4a4"/><rect x="0" y="2.800" width="8" height="1" fill="#a4a4a4"/><rect x="0" y="5" width="8" height="1" fill="#a4a4a4"/><rect x="0" y="7" width="8" height="8" fill="#909090"/><rect x="4.500" y="11" width="1.500" height="1.500" fill="#5ae05a"/><path d="M12.83 3.83L12.83 5.37L11.71 5.39L11.30 6.38L12.08 7.19L10.99 8.28L10.18 7.50L9.19 7.91L9.17 9.03L7.63 9.03L7.61 7.91L6.62 7.50L5.81 8.28L4.72 7.19L5.50 6.38L5.09 5.39L3.97 5.37L3.97 3.83L5.09 3.81L5.50 2.82L4.72 2.01L5.81 0.92L6.62 1.70L7.61 1.29L7.63 0.17L9.17 0.17L9.19 1.29L10.18 1.70L10.99 0.92L12.08 2.01L11.30 2.82L11.71 3.81Z" fill="#fff4d4" stroke="#e09c20" stroke-width="1.300" stroke-linejoin="round"/><circle cx="8.400" cy="4.600" r="1.300" fill="#fff" stroke="#e09c20" stroke-width=".8"/><rect x="8.500" y="8.500" width="7" height="6.500" fill="#f8cc50" stroke="#d89c20"/><path d="M12 8.500V15" stroke="#d89c20"/><rect x="9.500" y="9.500" width="1.500" height="5" fill="#fde48a"/><rect x="13" y="9.500" width="1.500" height="5" fill="#fde48a"/></svg>
<div class="t" style="left:295px;top:570px;letter-spacing:-0.004px">Sybase Anywhere</div>
<svg class="ab" style="left:260px;top:590px" width="9" height="9" viewBox="0 0 9 9"><rect x=".5" y=".5" width="8" height="8" rx="1.200" fill="#fdfdfd" stroke="#9a9a9a"/><path d="M2.500 4.500H6.500" stroke="#2c3e8c" stroke-width="1"/><path d="M4.500 2.500V6.500" stroke="#2c3e8c" stroke-width="1"/></svg>
<div class="hd" style="left:269px;top:594px;width:6px"></div>
<svg class="ab" style="left:276px;top:586px" width="16" height="16" viewBox="0 0 16 16"><rect x="0" y=".5" width="8" height="1" fill="#a4a4a4"/><rect x="0" y="2.800" width="8" height="1" fill="#a4a4a4"/><rect x="0" y="5" width="8" height="1" fill="#a4a4a4"/><rect x="0" y="7" width="8" height="8" fill="#909090"/><rect x="4.500" y="11" width="1.500" height="1.500" fill="#5ae05a"/><path d="M12.83 3.83L12.83 5.37L11.71 5.39L11.30 6.38L12.08 7.19L10.99 8.28L10.18 7.50L9.19 7.91L9.17 9.03L7.63 9.03L7.61 7.91L6.62 7.50L5.81 8.28L4.72 7.19L5.50 6.38L5.09 5.39L3.97 5.37L3.97 3.83L5.09 3.81L5.50 2.82L4.72 2.01L5.81 0.92L6.62 1.70L7.61 1.29L7.63 0.17L9.17 0.17L9.19 1.29L10.18 1.70L10.99 0.92L12.08 2.01L11.30 2.82L11.71 3.81Z" fill="#fff4d4" stroke="#e09c20" stroke-width="1.300" stroke-linejoin="round"/><circle cx="8.400" cy="4.600" r="1.300" fill="#fff" stroke="#e09c20" stroke-width=".8"/><rect x="8.500" y="8.500" width="7" height="6.500" fill="#f8cc50" stroke="#d89c20"/><path d="M12 8.500V15" stroke="#d89c20"/><rect x="9.500" y="9.500" width="1.500" height="5" fill="#fde48a"/><rect x="13" y="9.500" width="1.500" height="5" fill="#fde48a"/></svg>
<div class="t" style="left:295px;top:586px;letter-spacing:-0.316px">Sybase ASE</div>
<svg class="ab" style="left:260px;top:606px" width="9" height="9" viewBox="0 0 9 9"><rect x=".5" y=".5" width="8" height="8" rx="1.200" fill="#fdfdfd" stroke="#9a9a9a"/><path d="M2.500 4.500H6.500" stroke="#2c3e8c" stroke-width="1"/><path d="M4.500 2.500V6.500" stroke="#2c3e8c" stroke-width="1"/></svg>
<div class="hd" style="left:269px;top:610px;width:6px"></div>
<svg class="ab" style="left:276px;top:602px" width="16" height="16" viewBox="0 0 16 16"><rect x="0" y=".5" width="8" height="1" fill="#a4a4a4"/><rect x="0" y="2.800" width="8" height="1" fill="#a4a4a4"/><rect x="0" y="5" width="8" height="1" fill="#a4a4a4"/><rect x="0" y="7" width="8" height="8" fill="#909090"/><rect x="4.500" y="11" width="1.500" height="1.500" fill="#5ae05a"/><path d="M12.83 3.83L12.83 5.37L11.71 5.39L11.30 6.38L12.08 7.19L10.99 8.28L10.18 7.50L9.19 7.91L9.17 9.03L7.63 9.03L7.61 7.91L6.62 7.50L5.81 8.28L4.72 7.19L5.50 6.38L5.09 5.39L3.97 5.37L3.97 3.83L5.09 3.81L5.50 2.82L4.72 2.01L5.81 0.92L6.62 1.70L7.61 1.29L7.63 0.17L9.17 0.17L9.19 1.29L10.18 1.70L10.99 0.92L12.08 2.01L11.30 2.82L11.71 3.81Z" fill="#fff4d4" stroke="#e09c20" stroke-width="1.300" stroke-linejoin="round"/><circle cx="8.400" cy="4.600" r="1.300" fill="#fff" stroke="#e09c20" stroke-width=".8"/><rect x="8.500" y="8.500" width="7" height="6.500" fill="#f8cc50" stroke="#d89c20"/><path d="M12 8.500V15" stroke="#d89c20"/><rect x="9.500" y="9.500" width="1.500" height="5" fill="#fde48a"/><rect x="13" y="9.500" width="1.500" height="5" fill="#fde48a"/></svg>
<div class="t" style="left:295px;top:602px;letter-spacing:-0.04px">Sybase IQ</div>
<svg class="ab" style="left:260px;top:622px" width="9" height="9" viewBox="0 0 9 9"><rect x=".5" y=".5" width="8" height="8" rx="1.200" fill="#fdfdfd" stroke="#9a9a9a"/><path d="M2.500 4.500H6.500" stroke="#2c3e8c" stroke-width="1"/><path d="M4.500 2.500V6.500" stroke="#2c3e8c" stroke-width="1"/></svg>
<div class="hd" style="left:269px;top:626px;width:6px"></div>
<svg class="ab" style="left:276px;top:618px" width="16" height="16" viewBox="0 0 16 16"><rect x="0" y=".5" width="8" height="1" fill="#a4a4a4"/><rect x="0" y="2.800" width="8" height="1" fill="#a4a4a4"/><rect x="0" y="5" width="8" height="1" fill="#a4a4a4"/><rect x="0" y="7" width="8" height="8" fill="#909090"/><rect x="4.500" y="11" width="1.500" height="1.500" fill="#5ae05a"/><path d="M12.83 3.83L12.83 5.37L11.71 5.39L11.30 6.38L12.08 7.19L10.99 8.28L10.18 7.50L9.19 7.91L9.17 9.03L7.63 9.03L7.61 7.91L6.62 7.50L5.81 8.28L4.72 7.19L5.50 6.38L5.09 5.39L3.97 5.37L3.97 3.83L5.09 3.81L5.50 2.82L4.72 2.01L5.81 0.92L6.62 1.70L7.61 1.29L7.63 0.17L9.17 0.17L9.19 1.29L10.18 1.70L10.99 0.92L12.08 2.01L11.30 2.82L11.71 3.81Z" fill="#fff4d4" stroke="#e09c20" stroke-width="1.300" stroke-linejoin="round"/><circle cx="8.400" cy="4.600" r="1.300" fill="#fff" stroke="#e09c20" stroke-width=".8"/><rect x="8.500" y="8.500" width="7" height="6.500" fill="#f8cc50" stroke="#d89c20"/><path d="M12 8.500V15" stroke="#d89c20"/><rect x="9.500" y="9.500" width="1.500" height="5" fill="#fde48a"/><rect x="13" y="9.500" width="1.500" height="5" fill="#fde48a"/></svg>
<div class="t" style="left:295px;top:618px;letter-spacing:0.273px">Teradata</div>
<svg class="ab" style="left:260px;top:638px" width="9" height="9" viewBox="0 0 9 9"><rect x=".5" y=".5" width="8" height="8" rx="1.200" fill="#fdfdfd" stroke="#9a9a9a"/><path d="M2.500 4.500H6.500" stroke="#2c3e8c" stroke-width="1"/><path d="M4.500 2.500V6.500" stroke="#2c3e8c" stroke-width="1"/></svg>
<div class="hd" style="left:269px;top:642px;width:6px"></div>
<svg class="ab" style="left:276px;top:634px" width="16" height="16" viewBox="0 0 16 16"><rect x="0" y=".5" width="8" height="1" fill="#a4a4a4"/><rect x="0" y="2.800" width="8" height="1" fill="#a4a4a4"/><rect x="0" y="5" width="8" height="1" fill="#a4a4a4"/><rect x="0" y="7" width="8" height="8" fill="#909090"/><rect x="4.500" y="11" width="1.500" height="1.500" fill="#5ae05a"/><path d="M12.83 3.83L12.83 5.37L11.71 5.39L11.30 6.38L12.08 7.19L10.99 8.28L10.18 7.50L9.19 7.91L9.17 9.03L7.63 9.03L7.61 7.91L6.62 7.50L5.81 8.28L4.72 7.19L5.50 6.38L5.09 5.39L3.97 5.37L3.97 3.83L5.09 3.81L5.50 2.82L4.72 2.01L5.81 0.92L6.62 1.70L7.61 1.29L7.63 0.17L9.17 0.17L9.19 1.29L10.18 1.70L10.99 0.92L12.08 2.01L11.30 2.82L11.71 3.81Z" fill="#fff4d4" stroke="#e09c20" stroke-width="1.300" stroke-linejoin="round"/><circle cx="8.400" cy="4.600" r="1.300" fill="#fff" stroke="#e09c20" stroke-width=".8"/><rect x="8.500" y="8.500" width="7" height="6.500" fill="#f8cc50" stroke="#d89c20"/><path d="M12 8.500V15" stroke="#d89c20"/><rect x="9.500" y="9.500" width="1.500" height="5" fill="#fde48a"/><rect x="13" y="9.500" width="1.500" height="5" fill="#fde48a"/></svg>
<div class="t" style="left:295px;top:634px;letter-spacing:-0.062px">Windows Azure</div>
<div class="ab" style="left:416.500px;top:392.500px;font-family:'Liberation Serif',serif;font-size:24px;letter-spacing:-0.150px;line-height:28px;color:#ea4640;white-space:nowrap">Floating Mode</div>
<div class="ab" style="left:419px;top:270px;width:153px;height:94px;background:#fcfcfc;border:1px solid #3c9cf0"></div>
<div class="ab" style="left:420px;top:271px;width:25px;height:92px;background:#f4f4f4"></div>
<div class="ab" style="left:423px;top:273px;width:21px;height:20px;background:#b8d8f8;border:1px solid #4a9ae8"></div>
<svg class="ab" style="left:428px;top:280px" width="8" height="7" viewBox="0 0 8 7"><path d="M.8 3L3 5.200L7.200 .8" stroke="#111" stroke-width="1.500" fill="none"/></svg>
<div class="cm" style="left:453px;top:276px;letter-spacing:0.073px">Floating Mode</div>
<div class="cm" style="left:453px;top:297px;letter-spacing:0.188px">Move to</div>
<svg class="ab" style="left:557px;top:301px" width="4" height="7" viewBox="0 0 4 7"><path d="M0 0L4 3.500L0 7Z" fill="#111"/></svg>
<div class="cm" style="left:453px;top:319px;letter-spacing:-0.193px">Maximize Panel</div>
<div class="ab" style="left:453px;top:338px;width:117px;height:1px;background:#dcdcdc"></div>
<div class="cm" style="left:453px;top:344px;letter-spacing:0.203px">Hide</div>
</body></html>
